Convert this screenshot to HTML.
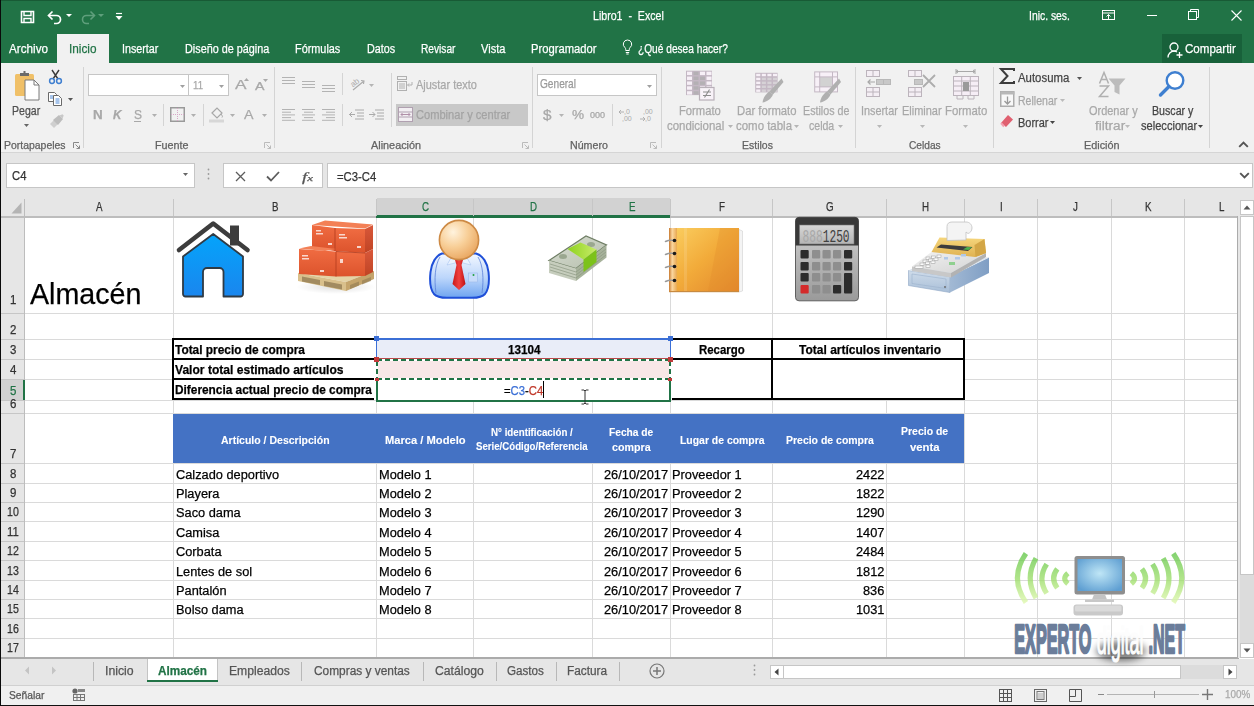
<!DOCTYPE html>
<html><head><meta charset="utf-8"><title>Libro1 - Excel</title>
<style>
html,body{margin:0;padding:0;}
body{width:1254px;height:706px;position:relative;overflow:hidden;background:#fff;font-family:"Liberation Sans",sans-serif;}
span{-webkit-text-stroke:0.25px currentColor;}
</style></head><body>
<div style="position:absolute;left:0px;top:0px;width:1254px;height:63px;background:#217346"></div>
<div style="position:absolute;left:0px;top:0px;width:1254px;height:1px;background:#185a35"></div>
<span id="t0" style="position:absolute;left:593.00px;top:8.78px;font:normal 13.37px/1 'Liberation Sans',sans-serif;color:#fff;white-space:pre;transform-origin:0 0;transform:scaleX(0.7945);">Libro1  -  Excel</span>
<span id="t1" style="position:absolute;left:1028.90px;top:9.87px;font:normal 12.79px/1 'Liberation Sans',sans-serif;color:#fff;white-space:pre;transform-origin:0 0;transform:scaleX(0.8109);">Inic. ses.</span>
<svg style="position:absolute;left:20px;top:10px;overflow:visible" width="15" height="14" viewBox="0 0 15 14"><path d="M1.5 1.5h12v11h-12z" fill="none" stroke="#fff" stroke-width="1.6"/><path d="M4 1.5v4h7v-4" fill="none" stroke="#fff" stroke-width="1.4"/><path d="M4 12.5v-4h7v4" fill="none" stroke="#fff" stroke-width="1.4"/></svg>
<svg style="position:absolute;left:47px;top:10px;overflow:visible" width="16" height="14" viewBox="0 0 16 14"><path d="M2 5.5h7.5a4 4 0 0 1 0 8H7" fill="none" stroke="#fff" stroke-width="1.7"/><path d="M5.5 1.5L1.5 5.5l4 4" fill="none" stroke="#fff" stroke-width="1.7"/></svg>
<svg style="position:absolute;left:66px;top:14px;overflow:visible" width="7" height="4" viewBox="0 0 7 4"><path d="M0 0h6l-3 3z" fill="#fff"/></svg>
<svg style="position:absolute;left:80px;top:10px;overflow:visible" width="16" height="14" viewBox="0 0 16 14"><path d="M14 5.5H6.5a4 4 0 0 0 0 8H9" fill="none" stroke="#5f9f7c" stroke-width="1.6"/><path d="M10.5 1.5l4 4-4 4" fill="none" stroke="#5f9f7c" stroke-width="1.6"/></svg>
<svg style="position:absolute;left:98px;top:14px;overflow:visible" width="7" height="4" viewBox="0 0 7 4"><path d="M0 0h6l-3 3z" fill="#5f9f7c"/></svg>
<svg style="position:absolute;left:115px;top:12px;overflow:visible" width="8" height="9" viewBox="0 0 8 9"><path d="M1 1.5h6" stroke="#fff" stroke-width="1.2"/><path d="M0.5 4h7l-3.5 4z" fill="#fff"/></svg>
<svg style="position:absolute;left:1102px;top:10px;overflow:visible" width="14" height="11" viewBox="0 0 14 11"><rect x="0.5" y="0.5" width="12" height="9" fill="none" stroke="#fff" stroke-width="1"/><path d="M0.5 3h12" stroke="#fff"/><path d="M6.5 9V4.5M4.5 6.5l2-2 2 2" fill="none" stroke="#fff"/></svg>
<div style="position:absolute;left:1147px;top:15px;width:10px;height:1px;background:#fff"></div>
<svg style="position:absolute;left:1188px;top:9px;overflow:visible" width="12" height="12" viewBox="0 0 12 12"><rect x="0.5" y="2.5" width="8" height="8" fill="none" stroke="#fff"/><path d="M2.5 2.5v-2h8v8h-2" fill="none" stroke="#fff"/></svg>
<svg style="position:absolute;left:1231px;top:10px;overflow:visible" width="11" height="11" viewBox="0 0 11 11"><path d="M0.5 0.5l10 10M10.5 0.5l-10 10" stroke="#fff" stroke-width="1.1"/></svg>
<div style="position:absolute;left:57px;top:34px;width:52px;height:29px;background:#f1f1f1"></div>
<span id="t2" style="position:absolute;left:9.00px;top:42.13px;font:normal 13.08px/1 'Liberation Sans',sans-serif;color:#fff;white-space:pre;transform-origin:0 0;transform:scaleX(0.8943);">Archivo</span>
<span id="t3" style="position:absolute;left:69.00px;top:42.13px;font:normal 13.08px/1 'Liberation Sans',sans-serif;color:#217346;white-space:pre;transform-origin:0 0;transform:scaleX(0.9007);">Inicio</span>
<span id="t4" style="position:absolute;left:122.20px;top:42.13px;font:normal 13.08px/1 'Liberation Sans',sans-serif;color:#fff;white-space:pre;transform-origin:0 0;transform:scaleX(0.8209);">Insertar</span>
<span id="t5" style="position:absolute;left:184.90px;top:42.13px;font:normal 13.08px/1 'Liberation Sans',sans-serif;color:#fff;white-space:pre;transform-origin:0 0;transform:scaleX(0.8281);">Diseño de página</span>
<span id="t6" style="position:absolute;left:295.20px;top:42.13px;font:normal 13.08px/1 'Liberation Sans',sans-serif;color:#fff;white-space:pre;transform-origin:0 0;transform:scaleX(0.8310);">Fórmulas</span>
<span id="t7" style="position:absolute;left:367.00px;top:42.13px;font:normal 13.08px/1 'Liberation Sans',sans-serif;color:#fff;white-space:pre;transform-origin:0 0;transform:scaleX(0.8252);">Datos</span>
<span id="t8" style="position:absolute;left:421.30px;top:42.13px;font:normal 13.08px/1 'Liberation Sans',sans-serif;color:#fff;white-space:pre;transform-origin:0 0;transform:scaleX(0.7780);">Revisar</span>
<span id="t9" style="position:absolute;left:481.30px;top:42.13px;font:normal 13.08px/1 'Liberation Sans',sans-serif;color:#fff;white-space:pre;transform-origin:0 0;transform:scaleX(0.8459);">Vista</span>
<span id="t10" style="position:absolute;left:531.20px;top:42.13px;font:normal 13.08px/1 'Liberation Sans',sans-serif;color:#fff;white-space:pre;transform-origin:0 0;transform:scaleX(0.8581);">Programador</span>
<span id="t11" style="position:absolute;left:638.10px;top:42.13px;font:normal 13.08px/1 'Liberation Sans',sans-serif;color:#fff;white-space:pre;transform-origin:0 0;transform:scaleX(0.7768);">¿Qué desea hacer?</span>
<svg style="position:absolute;left:622px;top:39px;overflow:visible" width="11" height="16" viewBox="0 0 11 16"><path d="M5.5 1a4.2 4.2 0 0 0-2.6 7.5c.6.6.8 1.2.8 2v1h3.6v-1c0-.8.2-1.4.8-2A4.2 4.2 0 0 0 5.5 1z" fill="none" stroke="#fff" stroke-width="1"/><path d="M3.8 13.5h3.4M4.3 15h2.4" stroke="#fff"/></svg>
<div style="position:absolute;left:1162px;top:34px;width:80px;height:29px;background:#18613a"></div>
<svg style="position:absolute;left:1167px;top:41.5px;overflow:visible" width="16" height="16" viewBox="0 0 16 16"><circle cx="7" cy="5" r="4" fill="none" stroke="#fff" stroke-width="1.3"/><path d="M1 15.5c0-3.8 2.7-6.3 6-6.3 1.2 0 2.2.3 3 .8" fill="none" stroke="#fff" stroke-width="1.3"/><path d="M12.5 10v6M9.5 13h6" stroke="#fff" stroke-width="1.3"/></svg>
<span id="t12" style="position:absolute;left:1184.90px;top:42.13px;font:normal 13.08px/1 'Liberation Sans',sans-serif;color:#fff;white-space:pre;transform-origin:0 0;transform:scaleX(0.8847);">Compartir</span>
<div style="position:absolute;left:0px;top:63px;width:1254px;height:90px;background:#f1f1f1"></div>
<div style="position:absolute;left:0px;top:152px;width:1254px;height:1px;background:#d5d5d5"></div>
<svg style="position:absolute;left:14px;top:70px;overflow:visible" width="28" height="31" viewBox="0 0 28 31"><rect x="1" y="4" width="19" height="22" rx="1.5" fill="#f0c068"/><path d="M6 6V3h3.5V1h2v2H15v3z" fill="#6b6b6b"/><path d="M11 10h9l5 5v15H11z" fill="#fff" stroke="#7a7a7a" stroke-width="1"/><path d="M20 10v5h5" fill="none" stroke="#7a7a7a"/></svg>
<span id="t13" style="position:absolute;left:12.20px;top:105.34px;font:normal 12.35px/1 'Liberation Sans',sans-serif;color:#505050;white-space:pre;transform-origin:0 0;transform:scaleX(0.8558);">Pegar</span>
<svg style="position:absolute;left:23.5px;top:124.3px;overflow:visible" width="6" height="4" viewBox="0 0 6 4"><path d="M0 0h5l-2.5 3z" fill="#666"/></svg>
<svg style="position:absolute;left:48px;top:69px;overflow:visible" width="15" height="15" viewBox="0 0 15 15"><path d="M4 1l6 9M11 1L5 10" stroke="#3a3a3a" stroke-width="1.4"/><circle cx="4" cy="12" r="2.4" fill="none" stroke="#3f7fd0" stroke-width="1.5"/><circle cx="11" cy="12" r="2.4" fill="none" stroke="#3f7fd0" stroke-width="1.5"/></svg>
<svg style="position:absolute;left:47px;top:91px;overflow:visible" width="16" height="15" viewBox="0 0 16 15"><path d="M1.5 1.5h6l2 2v7h-8z" fill="#fff" stroke="#6a6a6a"/><path d="M6.5 4.5h5l3 3v7h-8z" fill="#fff" stroke="#6a6a6a"/><path d="M8.5 8h4M8.5 10h4M8.5 12h4M3 5h3M3 7h3" stroke="#4f8ad8" stroke-width="1"/></svg>
<svg style="position:absolute;left:68.4px;top:98.3px;overflow:visible" width="6" height="4" viewBox="0 0 6 4"><path d="M0 0h5l-2.5 3z" fill="#555"/></svg>
<svg style="position:absolute;left:49px;top:114px;overflow:visible" width="15" height="14" viewBox="0 0 15 14"><path d="M1 10l4-4 4 4-4 4z" fill="#cfcfcf"/><path d="M4 6l6-5 4 4-5 6z" fill="#bdbdbd"/><path d="M10.5 1.5l3-1.2 1.2 1.2-1.2 3z" fill="#c8c8c8"/></svg>
<span id="t14" style="position:absolute;left:4.20px;top:140.27px;font:normal 10.90px/1 'Liberation Sans',sans-serif;color:#626262;white-space:pre;transform-origin:0 0;transform:scaleX(0.9597);">Portapapeles</span>
<svg style="position:absolute;left:73px;top:142px;overflow:visible" width="7" height="7" viewBox="0 0 7 7"><path d="M0.5 6V0.5H6" fill="none" stroke="#888" stroke-width="1"/><path d="M2.5 2.5l4 4M6.5 3.5v3h-3" fill="none" stroke="#888" stroke-width="1"/></svg>
<div style="position:absolute;left:83px;top:67px;width:1px;height:81px;background:#d4d4d4"></div>
<div style="position:absolute;left:88px;top:74px;width:101px;height:22px;background:#fff;border:1px solid #c6c6c6;box-sizing:border-box"></div>
<div style="position:absolute;left:188px;top:74px;width:41px;height:22px;background:#fff;border:1px solid #c6c6c6;box-sizing:border-box"></div>
<svg style="position:absolute;left:180px;top:85px;overflow:visible" width="6" height="4" viewBox="0 0 6 4"><path d="M0 0h5l-2.5 3z" fill="#a0a0a0"/></svg>
<svg style="position:absolute;left:219px;top:85px;overflow:visible" width="6" height="4" viewBox="0 0 6 4"><path d="M0 0h5l-2.5 3z" fill="#a0a0a0"/></svg>
<span id="t15" style="position:absolute;left:192.50px;top:79.90px;font:normal 11.34px/1 'Liberation Sans',sans-serif;color:#a8a8a8;white-space:pre;transform-origin:0 0;transform:scaleX(0.8499);">11</span>
<span id="t16" style="position:absolute;left:235.00px;top:79.42px;font:normal 12.50px/1 'Liberation Sans',sans-serif;color:#a8a8a8;white-space:pre;transform-origin:0 0;transform:scaleX(1.3783);">A</span>
<svg style="position:absolute;left:244px;top:78px;overflow:visible" width="5" height="3" viewBox="0 0 5 3"><path d="M0 3l2.5-3 2.5 3z" fill="#aaa"/></svg>
<span id="t17" style="position:absolute;left:255.00px;top:81.89px;font:normal 10.17px/1 'Liberation Sans',sans-serif;color:#a8a8a8;white-space:pre;transform-origin:0 0;transform:scaleX(1.4009);">A</span>
<svg style="position:absolute;left:263px;top:79px;overflow:visible" width="5" height="3" viewBox="0 0 5 3"><path d="M0 0h5l-2.5 3z" fill="#aaa"/></svg>
<span id="t18" style="position:absolute;left:92.80px;top:109.16px;font:bold 12.21px/1 'Liberation Sans',sans-serif;color:#a8a8a8;white-space:pre;transform-origin:0 0;transform:scaleX(1.0988);">N</span>
<span id="t19" style="position:absolute;left:113.00px;top:109.16px;font:bold 12.21px/1 'Liberation Sans',sans-serif;color:#a8a8a8;white-space:pre;transform-origin:0 0;transform:scaleX(0.9628);font-style:italic">K</span>
<span id="t20" style="position:absolute;left:133.50px;top:109.16px;font:normal 12.21px/1 'Liberation Sans',sans-serif;color:#a8a8a8;white-space:pre;transform-origin:0 0;transform:scaleX(0.9827);">S</span>
<div style="position:absolute;left:134px;top:121px;width:7px;height:1px;background:#a8a8a8"></div>
<svg style="position:absolute;left:152px;top:114px;overflow:visible" width="6" height="4" viewBox="0 0 6 4"><path d="M0 0h5l-2.5 3z" fill="#b0b0b0"/></svg>
<div style="position:absolute;left:163px;top:104px;width:1px;height:22px;background:#d4d4d4"></div>
<svg style="position:absolute;left:170px;top:107px;overflow:visible" width="15" height="15" viewBox="0 0 15 15"><rect x="0.75" y="0.75" width="13.5" height="13.5" fill="none" stroke="#9a9a9a" stroke-width="1.5"/><path d="M7.5 1v13M1 7.5h13" stroke="#d8a8c8" stroke-width="1" stroke-dasharray="1 1"/></svg>
<svg style="position:absolute;left:191px;top:114px;overflow:visible" width="6" height="4" viewBox="0 0 6 4"><path d="M0 0h5l-2.5 3z" fill="#b0b0b0"/></svg>
<div style="position:absolute;left:203px;top:104px;width:1px;height:22px;background:#d4d4d4"></div>
<svg style="position:absolute;left:209px;top:106px;overflow:visible" width="16" height="17" viewBox="0 0 16 17"><path d="M3 7l5-5 5 5-5 5z" fill="none" stroke="#a8a8a8" stroke-width="1.2"/><path d="M12 8c1 1.5 2 2.5 1 3.5" fill="none" stroke="#a8a8a8"/><rect x="0" y="13.5" width="15" height="3" fill="#d7d7d7"/></svg>
<svg style="position:absolute;left:230px;top:114px;overflow:visible" width="6" height="4" viewBox="0 0 6 4"><path d="M0 0h5l-2.5 3z" fill="#b0b0b0"/></svg>
<span id="t21" style="position:absolute;left:244.00px;top:108.67px;font:normal 12.79px/1 'Liberation Sans',sans-serif;color:#a8a8a8;white-space:pre;transform-origin:0 0;transform:scaleX(1.1136);">A</span>
<svg style="position:absolute;left:262px;top:114px;overflow:visible" width="6" height="4" viewBox="0 0 6 4"><path d="M0 0h5l-2.5 3z" fill="#b0b0b0"/></svg>
<span id="t22" style="position:absolute;left:154.50px;top:140.27px;font:normal 10.90px/1 'Liberation Sans',sans-serif;color:#626262;white-space:pre;transform-origin:0 0;transform:scaleX(0.9880);">Fuente</span>
<svg style="position:absolute;left:263.5px;top:142px;overflow:visible" width="7" height="7" viewBox="0 0 7 7"><path d="M0.5 6V0.5H6" fill="none" stroke="#bbb" stroke-width="1"/><path d="M2.5 2.5l4 4M6.5 3.5v3h-3" fill="none" stroke="#bbb" stroke-width="1"/></svg>
<div style="position:absolute;left:274px;top:67px;width:1px;height:81px;background:#d4d4d4"></div>
<svg style="position:absolute;left:282px;top:77px;overflow:visible" width="13" height="9" viewBox="0 0 13 9"><rect x="0" y="0" width="13" height="1" fill="#b3b3b3"/><rect x="0" y="3" width="13" height="1" fill="#b3b3b3"/><rect x="0" y="6" width="13" height="1" fill="#b3b3b3"/></svg>
<svg style="position:absolute;left:302px;top:81px;overflow:visible" width="13" height="9" viewBox="0 0 13 9"><rect x="0" y="0" width="13" height="1" fill="#b3b3b3"/><rect x="0" y="3" width="13" height="1" fill="#b3b3b3"/><rect x="0" y="6" width="13" height="1" fill="#b3b3b3"/></svg>
<svg style="position:absolute;left:322px;top:85px;overflow:visible" width="13" height="9" viewBox="0 0 13 9"><rect x="0" y="0" width="13" height="1" fill="#b3b3b3"/><rect x="0" y="3" width="13" height="1" fill="#b3b3b3"/><rect x="0" y="6" width="13" height="1" fill="#b3b3b3"/></svg>
<svg style="position:absolute;left:282px;top:109px;overflow:visible" width="14" height="12" viewBox="0 0 14 12"><rect x="0" y="0.0" width="13" height="1" fill="#b3b3b3"/><rect x="0" y="2.7" width="9" height="1" fill="#b3b3b3"/><rect x="0" y="5.4" width="13" height="1" fill="#b3b3b3"/><rect x="0" y="8.1" width="9" height="1" fill="#b3b3b3"/><rect x="0" y="10.8" width="13" height="1" fill="#b3b3b3"/></svg>
<svg style="position:absolute;left:302px;top:109px;overflow:visible" width="14" height="12" viewBox="0 0 14 12"><rect x="0.0" y="0.0" width="13" height="1" fill="#b3b3b3"/><rect x="2.0" y="2.7" width="9" height="1" fill="#b3b3b3"/><rect x="0.0" y="5.4" width="13" height="1" fill="#b3b3b3"/><rect x="2.0" y="8.1" width="9" height="1" fill="#b3b3b3"/><rect x="0.0" y="10.8" width="13" height="1" fill="#b3b3b3"/></svg>
<svg style="position:absolute;left:322px;top:109px;overflow:visible" width="14" height="12" viewBox="0 0 14 12"><rect x="0" y="0.0" width="13" height="1" fill="#b3b3b3"/><rect x="4" y="2.7" width="9" height="1" fill="#b3b3b3"/><rect x="0" y="5.4" width="13" height="1" fill="#b3b3b3"/><rect x="4" y="8.1" width="9" height="1" fill="#b3b3b3"/><rect x="0" y="10.8" width="13" height="1" fill="#b3b3b3"/></svg>
<div style="position:absolute;left:342px;top:73px;width:1px;height:22px;background:#d4d4d4"></div>
<div style="position:absolute;left:342px;top:104px;width:1px;height:22px;background:#d4d4d4"></div>
<svg style="position:absolute;left:349px;top:76px;overflow:visible" width="17" height="16" viewBox="0 0 17 16"><text x="1" y="9" font-family="Liberation Sans" font-size="8" fill="#aaa" transform="rotate(-40 6 6)">ab</text><path d="M4 14l11-9M12 4.5l3 .5-.5 3" fill="none" stroke="#aaa" stroke-width="1.1"/></svg>
<svg style="position:absolute;left:369px;top:84px;overflow:visible" width="6" height="4" viewBox="0 0 6 4"><path d="M0 0h5l-2.5 3z" fill="#b5b5b5"/></svg>
<svg style="position:absolute;left:349px;top:107px;overflow:visible" width="16" height="14" viewBox="0 0 16 14"><path d="M6 3h9M8 6h7M8 9h7M6 12h9M0 7.5h6M3 5l-2.5 2.5L3 10" fill="none" stroke="#aaa" stroke-width="1"/></svg>
<svg style="position:absolute;left:369px;top:107px;overflow:visible" width="16" height="14" viewBox="0 0 16 14"><path d="M6 3h9M8 6h7M8 9h7M6 12h9M0 7.5h6M3.5 5L6 7.5 3.5 10" fill="none" stroke="#aaa" stroke-width="1"/></svg>
<div style="position:absolute;left:391px;top:73px;width:1px;height:54px;background:#d4d4d4"></div>
<svg style="position:absolute;left:397px;top:76px;overflow:visible" width="16" height="16" viewBox="0 0 16 16"><rect x="0.5" y="0.5" width="9" height="3" fill="none" stroke="#b0b0b0"/><rect x="0.5" y="5.5" width="9" height="9" fill="none" stroke="#b0b0b0"/><path d="M2 8h6M2 10h6M2 12h6" stroke="#b0b0b0"/><path d="M15 6v3h-4M12 7.5l-1.5 1.5 1.5 1.5" fill="none" stroke="#b0b0b0"/></svg>
<span id="t23" style="position:absolute;left:415.90px;top:79.04px;font:normal 12.35px/1 'Liberation Sans',sans-serif;color:#a8a8a8;white-space:pre;transform-origin:0 0;transform:scaleX(0.8876);">Ajustar texto</span>
<div style="position:absolute;left:396px;top:104px;width:132px;height:22px;background:#c8c8c8"></div>
<svg style="position:absolute;left:398px;top:107px;overflow:visible" width="16" height="16" viewBox="0 0 16 16"><rect x="0.5" y="0.5" width="14" height="14" fill="#f2eef2" stroke="#b0a0b0"/><path d="M0.5 5h14M0.5 10h14" stroke="#b0a0b0"/><path d="M3 7.5h9M4.5 6l-1.5 1.5 1.5 1.5M10.5 6l1.5 1.5-1.5 1.5" fill="none" stroke="#b08fa8"/></svg>
<span id="t24" style="position:absolute;left:415.90px;top:109.04px;font:normal 12.35px/1 'Liberation Sans',sans-serif;color:#a3a3a3;white-space:pre;transform-origin:0 0;transform:scaleX(0.8984);">Combinar y centrar</span>
<span id="t25" style="position:absolute;left:370.70px;top:140.27px;font:normal 10.90px/1 'Liberation Sans',sans-serif;color:#626262;white-space:pre;transform-origin:0 0;transform:scaleX(0.9967);">Alineación</span>
<svg style="position:absolute;left:522px;top:142px;overflow:visible" width="7" height="7" viewBox="0 0 7 7"><path d="M0.5 6V0.5H6" fill="none" stroke="#bbb" stroke-width="1"/><path d="M2.5 2.5l4 4M6.5 3.5v3h-3" fill="none" stroke="#bbb" stroke-width="1"/></svg>
<div style="position:absolute;left:532px;top:67px;width:1px;height:81px;background:#d4d4d4"></div>
<div style="position:absolute;left:537px;top:74px;width:120px;height:22px;background:#fff;border:1px solid #c6c6c6;box-sizing:border-box"></div>
<span id="t26" style="position:absolute;left:539.50px;top:79.41px;font:normal 11.92px/1 'Liberation Sans',sans-serif;color:#9a9a9a;white-space:pre;transform-origin:0 0;transform:scaleX(0.8499);">General</span>
<svg style="position:absolute;left:647px;top:84.5px;overflow:visible" width="6" height="4" viewBox="0 0 6 4"><path d="M0 0h5l-2.5 3z" fill="#a0a0a0"/></svg>
<span id="t27" style="position:absolute;left:542.50px;top:108.81px;font:normal 13.81px/1 'Liberation Sans',sans-serif;color:#a8a8a8;white-space:pre;transform-origin:0 0;transform:scaleX(1.1057);">$</span>
<svg style="position:absolute;left:558.5px;top:114px;overflow:visible" width="6" height="4" viewBox="0 0 6 4"><path d="M0 0h5l-2.5 3z" fill="#b5b5b5"/></svg>
<span id="t28" style="position:absolute;left:572.40px;top:108.92px;font:normal 12.50px/1 'Liberation Sans',sans-serif;color:#a8a8a8;white-space:pre;transform-origin:0 0;transform:scaleX(1.0876);">%</span>
<span id="t29" style="position:absolute;left:590.30px;top:111.36px;font:normal 8.43px/1 'Liberation Sans',sans-serif;color:#a8a8a8;white-space:pre;transform-origin:0 0;transform:scaleX(1.0738);">000</span>
<div style="position:absolute;left:612px;top:104px;width:1px;height:22px;background:#d4d4d4"></div>
<svg style="position:absolute;left:619px;top:108px;overflow:visible" width="15" height="14" viewBox="0 0 15 14"><text x="5" y="6" font-family="Liberation Sans" font-size="7" fill="#aaa">,0</text><text x="3" y="13" font-family="Liberation Sans" font-size="7" fill="#aaa">,00</text><path d="M5 4H0M2 2L0 4l2 2" fill="none" stroke="#aaa" stroke-width="0.9"/></svg>
<svg style="position:absolute;left:639px;top:108px;overflow:visible" width="15" height="14" viewBox="0 0 15 14"><text x="4" y="6" font-family="Liberation Sans" font-size="7" fill="#aaa">,00</text><text x="6" y="13" font-family="Liberation Sans" font-size="7" fill="#aaa">,0</text><path d="M1 11h5M4 9l2 2-2 2" fill="none" stroke="#aaa" stroke-width="0.9"/></svg>
<span id="t30" style="position:absolute;left:570.40px;top:140.27px;font:normal 10.90px/1 'Liberation Sans',sans-serif;color:#626262;white-space:pre;transform-origin:0 0;transform:scaleX(0.9785);">Número</span>
<svg style="position:absolute;left:650px;top:142px;overflow:visible" width="7" height="7" viewBox="0 0 7 7"><path d="M0.5 6V0.5H6" fill="none" stroke="#bbb" stroke-width="1"/><path d="M2.5 2.5l4 4M6.5 3.5v3h-3" fill="none" stroke="#bbb" stroke-width="1"/></svg>
<div style="position:absolute;left:661px;top:67px;width:1px;height:81px;background:#d4d4d4"></div>
<svg style="position:absolute;left:686px;top:70px;overflow:visible" width="29" height="31" viewBox="0 0 29 31"><rect x="0" y="0.7" width="26" height="24.4" fill="#c4b8c4"/><rect x="1.00" y="1.70" width="5.00" height="3.38" fill="#f7f0f7"/><rect x="1.00" y="6.58" width="5.00" height="3.38" fill="#f7f0f7"/><rect x="1.00" y="11.46" width="5.00" height="3.38" fill="#f7f0f7"/><rect x="1.00" y="16.34" width="5.00" height="3.38" fill="#f7f0f7"/><rect x="1.00" y="21.22" width="5.00" height="3.38" fill="#f7f0f7"/><rect x="7.50" y="1.70" width="5.00" height="3.38" fill="#b4b0b4"/><rect x="7.50" y="6.58" width="5.00" height="3.38" fill="#b4b0b4"/><rect x="7.50" y="11.46" width="5.00" height="3.38" fill="#b4b0b4"/><rect x="7.50" y="16.34" width="5.00" height="3.38" fill="#b4b0b4"/><rect x="7.50" y="21.22" width="5.00" height="3.38" fill="#b4b0b4"/><rect x="14.00" y="1.70" width="5.00" height="3.38" fill="#f7f0f7"/><rect x="14.00" y="6.58" width="5.00" height="3.38" fill="#b4b0b4"/><rect x="14.00" y="11.46" width="5.00" height="3.38" fill="#b4b0b4"/><rect x="14.00" y="16.34" width="5.00" height="3.38" fill="#f7f0f7"/><rect x="14.00" y="21.22" width="5.00" height="3.38" fill="#f7f0f7"/><rect x="20.50" y="1.70" width="5.00" height="3.38" fill="#f7f0f7"/><rect x="20.50" y="6.58" width="5.00" height="3.38" fill="#f7f0f7"/><rect x="20.50" y="11.46" width="5.00" height="3.38" fill="#f7f0f7"/><rect x="20.50" y="16.34" width="5.00" height="3.38" fill="#f7f0f7"/><rect x="20.50" y="21.22" width="5.00" height="3.38" fill="#f7f0f7"/><rect x="13.5" y="17.5" width="14.5" height="12.5" fill="#f8f2f8" stroke="#b8b0b8" stroke-width="1.2"/><path d="M17 22h8M17 25.5h8M23.5 19.5l-5 8" stroke="#8c8c8c" stroke-width="1.1"/></svg>
<svg style="position:absolute;left:755px;top:72px;overflow:visible" width="30" height="30" viewBox="0 0 30 30"><rect x="0.2" y="0.8" width="22.4" height="19.6" fill="#c4b8c4"/><rect x="1.20" y="1.80" width="4.10" height="2.42" fill="#f7f0f7"/><rect x="1.20" y="5.72" width="4.10" height="2.42" fill="#f7f0f7"/><rect x="1.20" y="9.64" width="4.10" height="2.42" fill="#f7f0f7"/><rect x="1.20" y="13.56" width="4.10" height="2.42" fill="#f7f0f7"/><rect x="1.20" y="17.48" width="4.10" height="2.42" fill="#f7f0f7"/><rect x="6.80" y="1.80" width="4.10" height="2.42" fill="#f7f0f7"/><rect x="6.80" y="5.72" width="4.10" height="2.42" fill="#d6d2d6"/><rect x="6.80" y="9.64" width="4.10" height="2.42" fill="#d6d2d6"/><rect x="6.80" y="13.56" width="4.10" height="2.42" fill="#d6d2d6"/><rect x="6.80" y="17.48" width="4.10" height="2.42" fill="#d6d2d6"/><rect x="12.40" y="1.80" width="4.10" height="2.42" fill="#f7f0f7"/><rect x="12.40" y="5.72" width="4.10" height="2.42" fill="#d6d2d6"/><rect x="12.40" y="9.64" width="4.10" height="2.42" fill="#d6d2d6"/><rect x="12.40" y="13.56" width="4.10" height="2.42" fill="#d6d2d6"/><rect x="12.40" y="17.48" width="4.10" height="2.42" fill="#d6d2d6"/><rect x="18.00" y="1.80" width="4.10" height="2.42" fill="#f7f0f7"/><rect x="18.00" y="5.72" width="4.10" height="2.42" fill="#d6d2d6"/><rect x="18.00" y="9.64" width="4.10" height="2.42" fill="#d6d2d6"/><rect x="18.00" y="13.56" width="4.10" height="2.42" fill="#d6d2d6"/><rect x="18.00" y="17.48" width="4.10" height="2.42" fill="#d6d2d6"/><path d="M26.5 6.5l2 3.5-10.5 12.5-3.5-3z" fill="#b0b0b0"/><path d="M14.5 19.5l3.5 3c-1.5 4-6 7.5-10.5 8 .5-4.5 3.5-9 7-11z" fill="#b0b0b0"/></svg>
<svg style="position:absolute;left:814px;top:71px;overflow:visible" width="30" height="31" viewBox="0 0 30 31"><rect x="0.2" y="0.4" width="23.8" height="21" fill="#c4b8c4"/><rect x="1.2" y="1.4" width="4" height="4" fill="#f7f0f7"/><rect x="6.2" y="1.4" width="11.8" height="4" fill="#f7f0f7"/><rect x="19" y="1.4" width="4" height="4" fill="#f7f0f7"/><rect x="1.2" y="6.4" width="4" height="9" fill="#f7f0f7"/><rect x="6.2" y="6.4" width="11.8" height="9" fill="#d2d2d2"/><rect x="19" y="6.4" width="4" height="9" fill="#f7f0f7"/><rect x="1.2" y="16.4" width="4" height="4" fill="#f7f0f7"/><rect x="6.2" y="16.4" width="11.8" height="4" fill="#f7f0f7"/><rect x="19" y="16.4" width="4" height="4" fill="#f7f0f7"/><path d="M25 7.5l2 3.5-10.5 12.5-3.5-3z" fill="#b0b0b0"/><path d="M13 20.5l3.5 3c-1.5 4-6 7.5-10.5 8 .5-4.5 3.5-9 7-11z" fill="#b0b0b0"/></svg>
<span id="t31" style="position:absolute;left:678.50px;top:104.77px;font:normal 12.79px/1 'Liberation Sans',sans-serif;color:#a8a8a8;white-space:pre;transform-origin:0 0;transform:scaleX(0.8783);">Formato</span>
<span id="t32" style="position:absolute;left:667.10px;top:120.17px;font:normal 12.79px/1 'Liberation Sans',sans-serif;color:#a8a8a8;white-space:pre;transform-origin:0 0;transform:scaleX(0.8944);">condicional</span>
<svg style="position:absolute;left:728px;top:125px;overflow:visible" width="6" height="4" viewBox="0 0 6 4"><path d="M0 0h5l-2.5 3z" fill="#b5b5b5"/></svg>
<span id="t33" style="position:absolute;left:737.40px;top:104.77px;font:normal 12.79px/1 'Liberation Sans',sans-serif;color:#a8a8a8;white-space:pre;transform-origin:0 0;transform:scaleX(0.8817);">Dar formato</span>
<span id="t34" style="position:absolute;left:735.50px;top:120.17px;font:normal 12.79px/1 'Liberation Sans',sans-serif;color:#a8a8a8;white-space:pre;transform-origin:0 0;transform:scaleX(0.8956);">como tabla</span>
<svg style="position:absolute;left:794px;top:125px;overflow:visible" width="6" height="4" viewBox="0 0 6 4"><path d="M0 0h5l-2.5 3z" fill="#b5b5b5"/></svg>
<span id="t35" style="position:absolute;left:802.50px;top:104.77px;font:normal 12.79px/1 'Liberation Sans',sans-serif;color:#a8a8a8;white-space:pre;transform-origin:0 0;transform:scaleX(0.8372);">Estilos de</span>
<span id="t36" style="position:absolute;left:809.20px;top:120.17px;font:normal 12.79px/1 'Liberation Sans',sans-serif;color:#a8a8a8;white-space:pre;transform-origin:0 0;transform:scaleX(0.8245);">celda</span>
<svg style="position:absolute;left:838px;top:125px;overflow:visible" width="6" height="4" viewBox="0 0 6 4"><path d="M0 0h5l-2.5 3z" fill="#b5b5b5"/></svg>
<span id="t37" style="position:absolute;left:741.80px;top:140.27px;font:normal 10.90px/1 'Liberation Sans',sans-serif;color:#626262;white-space:pre;transform-origin:0 0;transform:scaleX(0.9633);">Estilos</span>
<div style="position:absolute;left:855px;top:67px;width:1px;height:81px;background:#d4d4d4"></div>
<svg style="position:absolute;left:866px;top:70px;overflow:visible" width="26" height="28" viewBox="0 0 26 28"><rect x="0.5" y="0.5" width="13" height="6" fill="#f4eef4" stroke="#bcb4bc"/><path d="M7.0 0v7" stroke="#bcb4bc"/><g transform="translate(0,17)"><rect x="0.5" y="0.5" width="13" height="9" fill="#f4eef4" stroke="#bcb4bc"/><path d="M7.0 0v10" stroke="#bcb4bc"/><path d="M0 5.0h14" stroke="#bcb4bc"/></g><g transform="translate(10,9)"><rect x="0.5" y="0.5" width="14" height="5" fill="#c8c8c8" stroke="#b8b8b8"/><path d="M7.5 0v6" stroke="#b8b8b8"/></g><path d="M9 12H2M4.5 9.5L2 12l2.5 2.5" fill="none" stroke="#a8a8a8" stroke-width="1.2"/></svg>
<span id="t38" style="position:absolute;left:860.50px;top:104.77px;font:normal 12.79px/1 'Liberation Sans',sans-serif;color:#a8a8a8;white-space:pre;transform-origin:0 0;transform:scaleX(0.8490);">Insertar</span>
<svg style="position:absolute;left:877px;top:125px;overflow:visible" width="6" height="4" viewBox="0 0 6 4"><path d="M0 0h5l-2.5 3z" fill="#b8b8b8"/></svg>
<svg style="position:absolute;left:908px;top:70px;overflow:visible" width="28" height="28" viewBox="0 0 28 28"><rect x="0.5" y="0.5" width="13" height="6" fill="#f4eef4" stroke="#bcb4bc"/><path d="M7.0 0v7" stroke="#bcb4bc"/><g transform="translate(0,17)"><rect x="0.5" y="0.5" width="13" height="9" fill="#f4eef4" stroke="#bcb4bc"/><path d="M7.0 0v10" stroke="#bcb4bc"/><path d="M0 5.0h14" stroke="#bcb4bc"/></g><g transform="translate(6,9)"><rect x="0.5" y="0.5" width="8" height="5" fill="#c8c8c8" stroke="#b8b8b8"/></g><path d="M15 5l12 12M27 5L15 17" stroke="#adadad" stroke-width="1.8"/></svg>
<span id="t39" style="position:absolute;left:901.50px;top:104.77px;font:normal 12.79px/1 'Liberation Sans',sans-serif;color:#a8a8a8;white-space:pre;transform-origin:0 0;transform:scaleX(0.8577);">Eliminar</span>
<svg style="position:absolute;left:920px;top:125px;overflow:visible" width="6" height="4" viewBox="0 0 6 4"><path d="M0 0h5l-2.5 3z" fill="#b8b8b8"/></svg>
<svg style="position:absolute;left:952px;top:69px;overflow:visible" width="28" height="32" viewBox="0 0 28 32"><path d="M4 2.5h19M4 0v5M23 0v5M6 1l-2 1.5L6 4M21 1l2 1.5L21 4" fill="none" stroke="#a8a8a8"/><g transform="translate(1,7)"><rect x="0.5" y="0.5" width="25" height="19" fill="#f6eef6" stroke="#bcb4bc"/><path d="M8.7 0v20" stroke="#bcb4bc"/><path d="M17.3 0v20" stroke="#bcb4bc"/><path d="M0 5.0h26" stroke="#bcb4bc"/><path d="M0 10.0h26" stroke="#bcb4bc"/><path d="M0 15.0h26" stroke="#bcb4bc"/><rect x="10" y="6" width="6" height="9" fill="#9a9a9a"/></g><path d="M5 27v3h6v-3M16 27v3h6v-3" fill="none" stroke="#bcb4bc"/></svg>
<span id="t40" style="position:absolute;left:945.00px;top:104.77px;font:normal 12.79px/1 'Liberation Sans',sans-serif;color:#a8a8a8;white-space:pre;transform-origin:0 0;transform:scaleX(0.8888);">Formato</span>
<svg style="position:absolute;left:963px;top:125px;overflow:visible" width="6" height="4" viewBox="0 0 6 4"><path d="M0 0h5l-2.5 3z" fill="#b8b8b8"/></svg>
<span id="t41" style="position:absolute;left:908.80px;top:140.27px;font:normal 10.90px/1 'Liberation Sans',sans-serif;color:#626262;white-space:pre;transform-origin:0 0;transform:scaleX(0.9349);">Celdas</span>
<div style="position:absolute;left:993px;top:67px;width:1px;height:81px;background:#d4d4d4"></div>
<svg style="position:absolute;left:1000px;top:68px;overflow:visible" width="16" height="16" viewBox="0 0 16 16"><path d="M14 3V1H1l6.5 7L1 15h13v-2" fill="none" stroke="#3d3d3d" stroke-width="2"/></svg>
<span id="t42" style="position:absolute;left:1017.70px;top:72.22px;font:normal 12.50px/1 'Liberation Sans',sans-serif;color:#444444;white-space:pre;transform-origin:0 0;transform:scaleX(0.9115);">Autosuma</span>
<svg style="position:absolute;left:1077px;top:77px;overflow:visible" width="6" height="4" viewBox="0 0 6 4"><path d="M0 0h5l-2.5 3z" fill="#555"/></svg>
<svg style="position:absolute;left:1000px;top:91px;overflow:visible" width="15" height="16" viewBox="0 0 15 16"><rect x="0.75" y="0.75" width="13" height="14.5" fill="#f8f8f8" stroke="#adadad" stroke-width="1.5"/><rect x="0.5" y="0.5" width="14" height="3" fill="#b8b8b8"/><path d="M7.5 5.5v7.5M4.5 10l3 3 3-3" fill="none" stroke="#9a9a9a" stroke-width="1.3"/></svg>
<span id="t43" style="position:absolute;left:1017.70px;top:94.72px;font:normal 12.50px/1 'Liberation Sans',sans-serif;color:#a8a8a8;white-space:pre;transform-origin:0 0;transform:scaleX(0.8440);">Rellenar</span>
<svg style="position:absolute;left:1060px;top:99px;overflow:visible" width="6" height="4" viewBox="0 0 6 4"><path d="M0 0h5l-2.5 3z" fill="#bbb"/></svg>
<svg style="position:absolute;left:1000px;top:114px;overflow:visible" width="14" height="13" viewBox="0 0 14 13"><path d="M1 9l7-8 5 4.5-7 7.5z" fill="#e06070"/><path d="M1 9l3 3.5" stroke="#f3a0b0" stroke-width="2"/></svg>
<span id="t44" style="position:absolute;left:1017.70px;top:117.22px;font:normal 12.50px/1 'Liberation Sans',sans-serif;color:#444444;white-space:pre;transform-origin:0 0;transform:scaleX(0.8781);">Borrar</span>
<svg style="position:absolute;left:1050px;top:121px;overflow:visible" width="6" height="4" viewBox="0 0 6 4"><path d="M0 0h5l-2.5 3z" fill="#444"/></svg>
<svg style="position:absolute;left:1098px;top:71px;overflow:visible" width="29" height="27" viewBox="0 0 29 27"><path d="M1.5 12.5L6 1.5l4.5 11M3.2 8.5h5.6" fill="none" stroke="#b0b0b0" stroke-width="1.5"/><path d="M1.5 15h9l-9 10.5h9" fill="none" stroke="#b0b0b0" stroke-width="1.5"/><path d="M10.5 7.5h17l-6 7v9l-5-2.5v-6.5z" fill="#bcbcbc"/></svg>
<span id="t45" style="position:absolute;left:1088.70px;top:105.02px;font:normal 12.50px/1 'Liberation Sans',sans-serif;color:#a8a8a8;white-space:pre;transform-origin:0 0;transform:scaleX(0.8760);">Ordenar y</span>
<span id="t46" style="position:absolute;left:1095.30px;top:120.42px;font:normal 12.50px/1 'Liberation Sans',sans-serif;color:#a8a8a8;white-space:pre;transform-origin:0 0;transform:scaleX(1.0871);">filtrar</span>
<svg style="position:absolute;left:1125px;top:125px;overflow:visible" width="6" height="4" viewBox="0 0 6 4"><path d="M0 0h5l-2.5 3z" fill="#bbb"/></svg>
<svg style="position:absolute;left:1158px;top:70px;overflow:visible" width="28" height="28" viewBox="0 0 28 28"><circle cx="17" cy="10.5" r="8.3" fill="#fff" stroke="#3e7fd0" stroke-width="2.4"/><path d="M11 16.5L2.5 25" stroke="#3e7fd0" stroke-width="3.4" stroke-linecap="round"/></svg>
<span id="t47" style="position:absolute;left:1152.10px;top:105.02px;font:normal 12.50px/1 'Liberation Sans',sans-serif;color:#444444;white-space:pre;transform-origin:0 0;transform:scaleX(0.8511);">Buscar y</span>
<span id="t48" style="position:absolute;left:1140.70px;top:120.42px;font:normal 12.50px/1 'Liberation Sans',sans-serif;color:#444444;white-space:pre;transform-origin:0 0;transform:scaleX(0.8872);">seleccionar</span>
<svg style="position:absolute;left:1198px;top:125px;overflow:visible" width="6" height="4" viewBox="0 0 6 4"><path d="M0 0h5l-2.5 3z" fill="#444"/></svg>
<span id="t49" style="position:absolute;left:1083.90px;top:140.27px;font:normal 10.90px/1 'Liberation Sans',sans-serif;color:#626262;white-space:pre;transform-origin:0 0;transform:scaleX(0.9962);">Edición</span>
<div style="position:absolute;left:1209px;top:67px;width:1px;height:81px;background:#d4d4d4"></div>
<svg style="position:absolute;left:1238px;top:141px;overflow:visible" width="11" height="7" viewBox="0 0 11 7"><path d="M1.2 5.8l4.3-4.3 4.3 4.3" fill="none" stroke="#555" stroke-width="1.9"/></svg>
<div style="position:absolute;left:0px;top:153px;width:1254px;height:45px;background:#e6e6e6"></div>
<div style="position:absolute;left:6px;top:163px;width:189px;height:25px;background:#fff;border:1px solid #c6c6c6;box-sizing:border-box"></div>
<span id="t50" style="position:absolute;left:11.90px;top:170.36px;font:normal 12.21px/1 'Liberation Sans',sans-serif;color:#333;white-space:pre;transform-origin:0 0;transform:scaleX(0.9225);">C4</span>
<svg style="position:absolute;left:183px;top:173px;overflow:visible" width="6" height="4" viewBox="0 0 6 4"><path d="M0 0h5l-2.5 3z" fill="#666"/></svg>
<svg style="position:absolute;left:207px;top:168px;overflow:visible" width="3" height="13" viewBox="0 0 3 13"><circle cx="1.5" cy="1.5" r="0.9" fill="#9a9a9a"/><circle cx="1.5" cy="6" r="0.9" fill="#9a9a9a"/><circle cx="1.5" cy="10.5" r="0.9" fill="#9a9a9a"/></svg>
<div style="position:absolute;left:223px;top:163px;width:100px;height:25px;background:#fff;border:1px solid #c6c6c6;box-sizing:border-box"></div>
<svg style="position:absolute;left:235px;top:171px;overflow:visible" width="11" height="11" viewBox="0 0 11 11"><path d="M1 1l9 9M10 1l-9 9" stroke="#5c5c5c" stroke-width="1.3"/></svg>
<svg style="position:absolute;left:266px;top:171px;overflow:visible" width="14" height="11" viewBox="0 0 14 11"><path d="M1 5.5l4 4L13 1" fill="none" stroke="#5c5c5c" stroke-width="1.8"/></svg>
<span id="t51" style="position:absolute;left:301.50px;top:169.93px;font:normal 13.08px/1 'Liberation Sans',sans-serif;color:#555;white-space:pre;transform-origin:0 0;transform:scaleX(1.4280);font-family:Liberation Serif"><i>f</i><span style="font-size:0.7em"><i>x</i></span></span>
<div style="position:absolute;left:327px;top:163px;width:926px;height:25px;background:#fff;border:1px solid #c6c6c6;box-sizing:border-box"></div>
<span id="t52" style="position:absolute;left:337.40px;top:170.03px;font:normal 13.08px/1 'Liberation Sans',sans-serif;color:#333;white-space:pre;transform-origin:0 0;transform:scaleX(0.8649);">=C3-C4</span>
<svg style="position:absolute;left:1239px;top:172px;overflow:visible" width="11" height="7" viewBox="0 0 11 7"><path d="M1.2 1.2l4.3 4.3 4.3-4.3" fill="none" stroke="#555" stroke-width="1.9"/></svg>
<div style="position:absolute;left:25px;top:218px;width:1212px;height:440px;background:#fff"></div>
<div style="position:absolute;left:1px;top:198px;width:1237px;height:19px;background:#e6e6e6"></div>
<div style="position:absolute;left:377px;top:198px;width:293px;height:19px;background:#d2d2d2"></div>
<div style="position:absolute;left:376px;top:215px;width:294px;height:2px;background:#217346"></div>
<div style="position:absolute;left:0px;top:216px;width:1238px;height:2px;background:#bdbdbd"></div>
<div style="position:absolute;left:376px;top:216px;width:294px;height:2px;background:#217346"></div>
<div style="position:absolute;left:173px;top:199px;width:1px;height:17px;background:#c6c6c6"></div>
<div style="position:absolute;left:376px;top:199px;width:1px;height:17px;background:#c6c6c6"></div>
<div style="position:absolute;left:473px;top:199px;width:1px;height:17px;background:#c6c6c6"></div>
<div style="position:absolute;left:592px;top:199px;width:1px;height:17px;background:#c6c6c6"></div>
<div style="position:absolute;left:670px;top:199px;width:1px;height:17px;background:#c6c6c6"></div>
<div style="position:absolute;left:772px;top:199px;width:1px;height:17px;background:#c6c6c6"></div>
<div style="position:absolute;left:886px;top:199px;width:1px;height:17px;background:#c6c6c6"></div>
<div style="position:absolute;left:964px;top:199px;width:1px;height:17px;background:#c6c6c6"></div>
<div style="position:absolute;left:1037px;top:199px;width:1px;height:17px;background:#c6c6c6"></div>
<div style="position:absolute;left:1111px;top:199px;width:1px;height:17px;background:#c6c6c6"></div>
<div style="position:absolute;left:1184px;top:199px;width:1px;height:17px;background:#c6c6c6"></div>
<div style="position:absolute;left:24px;top:199px;width:1px;height:459px;background:#bdbdbd"></div>
<svg style="position:absolute;left:11px;top:202px;overflow:visible" width="11" height="12" viewBox="0 0 11 12"><path d="M10.5 0.5V11.5H0.5z" fill="#b4b4b4"/></svg>
<span id="t53" style="position:absolute;left:96.25px;top:201.22px;font:normal 12.50px/1 'Liberation Sans',sans-serif;color:#333;white-space:pre;transform-origin:0 0;transform:scaleX(0.7800);">A</span>
<span id="t54" style="position:absolute;left:272.25px;top:201.22px;font:normal 12.50px/1 'Liberation Sans',sans-serif;color:#333;white-space:pre;transform-origin:0 0;transform:scaleX(0.7800);">B</span>
<span id="t55" style="position:absolute;left:421.98px;top:201.22px;font:normal 12.50px/1 'Liberation Sans',sans-serif;color:#217346;white-space:pre;transform-origin:0 0;transform:scaleX(0.7800);">C</span>
<span id="t56" style="position:absolute;left:529.98px;top:201.22px;font:normal 12.50px/1 'Liberation Sans',sans-serif;color:#217346;white-space:pre;transform-origin:0 0;transform:scaleX(0.7800);">D</span>
<span id="t57" style="position:absolute;left:628.75px;top:201.22px;font:normal 12.50px/1 'Liberation Sans',sans-serif;color:#217346;white-space:pre;transform-origin:0 0;transform:scaleX(0.7800);">E</span>
<span id="t58" style="position:absolute;left:719.02px;top:201.22px;font:normal 12.50px/1 'Liberation Sans',sans-serif;color:#333;white-space:pre;transform-origin:0 0;transform:scaleX(0.7800);">F</span>
<span id="t59" style="position:absolute;left:826.20px;top:201.22px;font:normal 12.50px/1 'Liberation Sans',sans-serif;color:#333;white-space:pre;transform-origin:0 0;transform:scaleX(0.7800);">G</span>
<span id="t60" style="position:absolute;left:922.48px;top:201.22px;font:normal 12.50px/1 'Liberation Sans',sans-serif;color:#333;white-space:pre;transform-origin:0 0;transform:scaleX(0.7800);">H</span>
<span id="t61" style="position:absolute;left:1000.14px;top:201.22px;font:normal 12.50px/1 'Liberation Sans',sans-serif;color:#333;white-space:pre;transform-origin:0 0;transform:scaleX(0.7800);">I</span>
<span id="t62" style="position:absolute;left:1072.56px;top:201.22px;font:normal 12.50px/1 'Liberation Sans',sans-serif;color:#333;white-space:pre;transform-origin:0 0;transform:scaleX(0.7800);">J</span>
<span id="t63" style="position:absolute;left:1145.25px;top:201.22px;font:normal 12.50px/1 'Liberation Sans',sans-serif;color:#333;white-space:pre;transform-origin:0 0;transform:scaleX(0.7800);">K</span>
<span id="t64" style="position:absolute;left:1218.79px;top:201.22px;font:normal 12.50px/1 'Liberation Sans',sans-serif;color:#333;white-space:pre;transform-origin:0 0;transform:scaleX(0.7800);">L</span>
<div style="position:absolute;left:1px;top:218px;width:23px;height:440px;background:#e6e6e6"></div>
<div style="position:absolute;left:1px;top:380px;width:23px;height:20px;background:#d2d2d2"></div>
<div style="position:absolute;left:23px;top:380px;width:2px;height:20px;background:#217346"></div>
<div style="position:absolute;left:1px;top:313px;width:23px;height:1px;background:#c6c6c6"></div>
<div style="position:absolute;left:1px;top:339px;width:23px;height:1px;background:#c6c6c6"></div>
<div style="position:absolute;left:1px;top:359px;width:23px;height:1px;background:#c6c6c6"></div>
<div style="position:absolute;left:1px;top:379px;width:23px;height:1px;background:#c6c6c6"></div>
<div style="position:absolute;left:1px;top:400px;width:23px;height:1px;background:#c6c6c6"></div>
<div style="position:absolute;left:1px;top:413px;width:23px;height:1px;background:#c6c6c6"></div>
<div style="position:absolute;left:1px;top:463px;width:23px;height:1px;background:#c6c6c6"></div>
<div style="position:absolute;left:1px;top:483px;width:23px;height:1px;background:#c6c6c6"></div>
<div style="position:absolute;left:1px;top:502px;width:23px;height:1px;background:#c6c6c6"></div>
<div style="position:absolute;left:1px;top:521px;width:23px;height:1px;background:#c6c6c6"></div>
<div style="position:absolute;left:1px;top:541px;width:23px;height:1px;background:#c6c6c6"></div>
<div style="position:absolute;left:1px;top:560px;width:23px;height:1px;background:#c6c6c6"></div>
<div style="position:absolute;left:1px;top:580px;width:23px;height:1px;background:#c6c6c6"></div>
<div style="position:absolute;left:1px;top:599px;width:23px;height:1px;background:#c6c6c6"></div>
<div style="position:absolute;left:1px;top:618px;width:23px;height:1px;background:#c6c6c6"></div>
<div style="position:absolute;left:1px;top:638px;width:23px;height:1px;background:#c6c6c6"></div>
<div style="position:absolute;left:1px;top:657px;width:23px;height:1px;background:#c6c6c6"></div>
<div style="position:absolute;left:25px;top:313px;width:1212px;height:1px;background:#dadada"></div>
<div style="position:absolute;left:25px;top:339px;width:1212px;height:1px;background:#dadada"></div>
<div style="position:absolute;left:25px;top:359px;width:1212px;height:1px;background:#dadada"></div>
<div style="position:absolute;left:25px;top:379px;width:1212px;height:1px;background:#dadada"></div>
<div style="position:absolute;left:25px;top:400px;width:1212px;height:1px;background:#dadada"></div>
<div style="position:absolute;left:25px;top:413px;width:1212px;height:1px;background:#dadada"></div>
<div style="position:absolute;left:25px;top:463px;width:1212px;height:1px;background:#dadada"></div>
<div style="position:absolute;left:25px;top:483px;width:1212px;height:1px;background:#dadada"></div>
<div style="position:absolute;left:25px;top:502px;width:1212px;height:1px;background:#dadada"></div>
<div style="position:absolute;left:25px;top:521px;width:1212px;height:1px;background:#dadada"></div>
<div style="position:absolute;left:25px;top:541px;width:1212px;height:1px;background:#dadada"></div>
<div style="position:absolute;left:25px;top:560px;width:1212px;height:1px;background:#dadada"></div>
<div style="position:absolute;left:25px;top:580px;width:1212px;height:1px;background:#dadada"></div>
<div style="position:absolute;left:25px;top:599px;width:1212px;height:1px;background:#dadada"></div>
<div style="position:absolute;left:25px;top:618px;width:1212px;height:1px;background:#dadada"></div>
<div style="position:absolute;left:25px;top:638px;width:1212px;height:1px;background:#dadada"></div>
<div style="position:absolute;left:25px;top:657px;width:1212px;height:1px;background:#dadada"></div>
<div style="position:absolute;left:173px;top:218px;width:1px;height:440px;background:#dadada"></div>
<div style="position:absolute;left:376px;top:218px;width:1px;height:440px;background:#dadada"></div>
<div style="position:absolute;left:473px;top:218px;width:1px;height:440px;background:#dadada"></div>
<div style="position:absolute;left:592px;top:218px;width:1px;height:440px;background:#dadada"></div>
<div style="position:absolute;left:670px;top:218px;width:1px;height:440px;background:#dadada"></div>
<div style="position:absolute;left:772px;top:218px;width:1px;height:440px;background:#dadada"></div>
<div style="position:absolute;left:886px;top:218px;width:1px;height:440px;background:#dadada"></div>
<div style="position:absolute;left:964px;top:218px;width:1px;height:440px;background:#dadada"></div>
<div style="position:absolute;left:1037px;top:218px;width:1px;height:440px;background:#dadada"></div>
<div style="position:absolute;left:1111px;top:218px;width:1px;height:440px;background:#dadada"></div>
<div style="position:absolute;left:1184px;top:218px;width:1px;height:440px;background:#dadada"></div>
<div style="position:absolute;left:1237px;top:216px;width:2px;height:443px;background:#ababab"></div>
<div style="position:absolute;left:0px;top:657px;width:1238px;height:2px;background:#ababab"></div>
<span id="t65" style="position:absolute;left:9.80px;top:294.04px;font:normal 12.35px/1 'Liberation Sans',sans-serif;color:#333;white-space:pre;transform-origin:0 0;transform:scaleX(0.9309);">1</span>
<span id="t66" style="position:absolute;left:9.80px;top:324.24px;font:normal 12.35px/1 'Liberation Sans',sans-serif;color:#333;white-space:pre;transform-origin:0 0;transform:scaleX(0.9309);">2</span>
<span id="t67" style="position:absolute;left:9.80px;top:344.24px;font:normal 12.35px/1 'Liberation Sans',sans-serif;color:#333;white-space:pre;transform-origin:0 0;transform:scaleX(0.9309);">3</span>
<span id="t68" style="position:absolute;left:9.80px;top:364.24px;font:normal 12.35px/1 'Liberation Sans',sans-serif;color:#333;white-space:pre;transform-origin:0 0;transform:scaleX(0.9309);">4</span>
<span id="t69" style="position:absolute;left:9.80px;top:385.24px;font:normal 12.35px/1 'Liberation Sans',sans-serif;color:#217346;white-space:pre;transform-origin:0 0;transform:scaleX(0.9309);">5</span>
<span id="t70" style="position:absolute;left:9.80px;top:398.24px;font:normal 12.35px/1 'Liberation Sans',sans-serif;color:#333;white-space:pre;transform-origin:0 0;transform:scaleX(0.9309);">6</span>
<span id="t71" style="position:absolute;left:9.80px;top:448.24px;font:normal 12.35px/1 'Liberation Sans',sans-serif;color:#333;white-space:pre;transform-origin:0 0;transform:scaleX(0.9309);">7</span>
<span id="t72" style="position:absolute;left:9.80px;top:468.24px;font:normal 12.35px/1 'Liberation Sans',sans-serif;color:#333;white-space:pre;transform-origin:0 0;transform:scaleX(0.9309);">8</span>
<span id="t73" style="position:absolute;left:9.80px;top:487.24px;font:normal 12.35px/1 'Liberation Sans',sans-serif;color:#333;white-space:pre;transform-origin:0 0;transform:scaleX(0.9309);">9</span>
<span id="t74" style="position:absolute;left:7.10px;top:506.24px;font:normal 12.35px/1 'Liberation Sans',sans-serif;color:#333;white-space:pre;transform-origin:0 0;transform:scaleX(0.8592);">10</span>
<span id="t75" style="position:absolute;left:7.10px;top:526.24px;font:normal 12.35px/1 'Liberation Sans',sans-serif;color:#333;white-space:pre;transform-origin:0 0;transform:scaleX(0.9199);">11</span>
<span id="t76" style="position:absolute;left:7.10px;top:545.24px;font:normal 12.35px/1 'Liberation Sans',sans-serif;color:#333;white-space:pre;transform-origin:0 0;transform:scaleX(0.8592);">12</span>
<span id="t77" style="position:absolute;left:7.10px;top:565.24px;font:normal 12.35px/1 'Liberation Sans',sans-serif;color:#333;white-space:pre;transform-origin:0 0;transform:scaleX(0.8592);">13</span>
<span id="t78" style="position:absolute;left:7.10px;top:584.24px;font:normal 12.35px/1 'Liberation Sans',sans-serif;color:#333;white-space:pre;transform-origin:0 0;transform:scaleX(0.8592);">14</span>
<span id="t79" style="position:absolute;left:7.10px;top:603.24px;font:normal 12.35px/1 'Liberation Sans',sans-serif;color:#333;white-space:pre;transform-origin:0 0;transform:scaleX(0.8592);">15</span>
<span id="t80" style="position:absolute;left:7.10px;top:623.24px;font:normal 12.35px/1 'Liberation Sans',sans-serif;color:#333;white-space:pre;transform-origin:0 0;transform:scaleX(0.8592);">16</span>
<span id="t81" style="position:absolute;left:7.10px;top:642.24px;font:normal 12.35px/1 'Liberation Sans',sans-serif;color:#333;white-space:pre;transform-origin:0 0;transform:scaleX(0.8592);">17</span>
<span id="t82" style="position:absolute;left:30.30px;top:279.23px;font:normal 30.09px/1 'Liberation Sans',sans-serif;color:#000;white-space:pre;transform-origin:0 0;transform:scaleX(0.9527);">Almacén</span>
<div style="position:absolute;left:173px;top:339px;width:791px;height:61px;background:#fff"></div>
<div style="position:absolute;left:173px;top:414px;width:791px;height:49px;background:#4472c4"></div>
<div style="position:absolute;left:172px;top:338px;width:202px;height:2px;background:#000"></div>
<div style="position:absolute;left:172px;top:398px;width:202px;height:2px;background:#000"></div>
<div style="position:absolute;left:172px;top:338px;width:2px;height:62px;background:#000"></div>
<div style="position:absolute;left:172px;top:358px;width:202px;height:2px;background:#000"></div>
<div style="position:absolute;left:172px;top:378px;width:202px;height:2px;background:#000"></div>
<div style="position:absolute;left:672px;top:338px;width:292px;height:2px;background:#000"></div>
<div style="position:absolute;left:672px;top:398px;width:292px;height:2px;background:#000"></div>
<div style="position:absolute;left:672px;top:358px;width:292px;height:2px;background:#000"></div>
<div style="position:absolute;left:771px;top:338px;width:2px;height:62px;background:#000"></div>
<div style="position:absolute;left:963px;top:338px;width:2px;height:62px;background:#000"></div>
<div style="position:absolute;left:376px;top:339px;width:295px;height:20px;background:#e9edf8"></div>
<div style="position:absolute;left:376px;top:338px;width:295px;height:2px;background:#3b6fd6"></div>
<div style="position:absolute;left:376px;top:338px;width:1px;height:20px;background:#3b6fd6"></div>
<div style="position:absolute;left:670px;top:338px;width:1px;height:20px;background:#3b6fd6"></div>
<div style="position:absolute;left:374px;top:336px;width:5px;height:5px;background:#3b6fd6"></div>
<div style="position:absolute;left:668px;top:336px;width:5px;height:5px;background:#3b6fd6"></div>
<div style="position:absolute;left:376px;top:360px;width:295px;height:19px;background:#f8e7e7"></div>
<div style="position:absolute;left:376px;top:358px;width:295px;height:1px;background:#b94a4a"></div>
<div style="position:absolute;left:377px;top:359px;width:293px;height:2px;background:repeating-linear-gradient(90deg,#217346 0 5px,#fff 5px 8px)"></div>
<div style="position:absolute;left:377px;top:378px;width:293px;height:2px;background:repeating-linear-gradient(90deg,#217346 0 5px,#fff 5px 8px)"></div>
<div style="position:absolute;left:376px;top:361px;width:2px;height:17px;background:repeating-linear-gradient(180deg,#217346 0 5px,#fff 5px 8px)"></div>
<div style="position:absolute;left:669px;top:361px;width:2px;height:17px;background:repeating-linear-gradient(180deg,#217346 0 5px,#fff 5px 8px)"></div>
<div style="position:absolute;left:374px;top:357px;width:5px;height:5px;background:#c03a3a"></div>
<div style="position:absolute;left:668px;top:357px;width:5px;height:5px;background:#c03a3a"></div>
<div style="position:absolute;left:375px;top:378px;width:4px;height:3px;background:#c03a3a"></div>
<div style="position:absolute;left:668px;top:378px;width:4px;height:3px;background:#c03a3a"></div>
<div style="position:absolute;left:376px;top:381px;width:2px;height:20px;background:#217346"></div>
<div style="position:absolute;left:669px;top:381px;width:2px;height:20px;background:#217346"></div>
<div style="position:absolute;left:376px;top:400px;width:295px;height:2px;background:#217346"></div>
<span id="t83" style="position:absolute;left:175.30px;top:342.76px;font:bold 13.52px/1 'Liberation Sans',sans-serif;color:#000;white-space:pre;transform-origin:0 0;transform:scaleX(0.8795);">Total precio de compra</span>
<span id="t84" style="position:absolute;left:175.30px;top:362.96px;font:bold 13.52px/1 'Liberation Sans',sans-serif;color:#000;white-space:pre;transform-origin:0 0;transform:scaleX(0.8938);">Valor total estimado artículos</span>
<span id="t85" style="position:absolute;left:175.30px;top:383.36px;font:bold 13.52px/1 'Liberation Sans',sans-serif;color:#000;white-space:pre;transform-origin:0 0;transform:scaleX(0.8767);">Diferencia actual precio de compra</span>
<span id="t86" style="position:absolute;left:507.90px;top:343.13px;font:bold 13.08px/1 'Liberation Sans',sans-serif;color:#000;white-space:pre;transform-origin:0 0;transform:scaleX(0.8962);">13104</span>
<span id="t87" style="position:absolute;left:699.10px;top:343.13px;font:bold 13.08px/1 'Liberation Sans',sans-serif;color:#000;white-space:pre;transform-origin:0 0;transform:scaleX(0.8712);">Recargo</span>
<span id="t88" style="position:absolute;left:798.50px;top:343.13px;font:bold 13.08px/1 'Liberation Sans',sans-serif;color:#000;white-space:pre;transform-origin:0 0;transform:scaleX(0.9188);">Total artículos inventario</span>
<span id="t89" style="position:absolute;left:504.20px;top:384.92px;font:normal 12.50px/1 'Liberation Sans',sans-serif;color:#000;white-space:pre;transform-origin:0 0;transform:scaleX(0.9044);">=<span style="color:#3b6fd6">C3</span>-<span style="color:#c0392b">C4</span></span>
<div style="position:absolute;left:543px;top:381px;width:1px;height:17px;background:#000"></div>
<svg style="position:absolute;left:580px;top:389px;overflow:visible" width="10" height="17" viewBox="0 0 10 17"><path d="M1.5 1h2.5l1 1 1-1h2.5M5 2v12M1.5 15h2.5l1-1 1 1h2.5" fill="none" stroke="#333" stroke-width="1"/></svg>
<span id="t90" style="position:absolute;left:221.40px;top:434.06px;font:bold 11.63px/1 'Liberation Sans',sans-serif;color:#fff;white-space:pre;transform-origin:0 0;transform:scaleX(0.9038);-webkit-text-stroke:0.1px #fff">Artículo / Descripción</span>
<span id="t91" style="position:absolute;left:385.30px;top:434.06px;font:bold 11.63px/1 'Liberation Sans',sans-serif;color:#fff;white-space:pre;transform-origin:0 0;transform:scaleX(0.9597);-webkit-text-stroke:0.1px #fff">Marca / Modelo</span>
<span id="t92" style="position:absolute;left:491.30px;top:425.66px;font:bold 11.63px/1 'Liberation Sans',sans-serif;color:#fff;white-space:pre;transform-origin:0 0;transform:scaleX(0.8375);-webkit-text-stroke:0.1px #fff">N° identificación /</span>
<span id="t93" style="position:absolute;left:476.40px;top:440.46px;font:bold 11.63px/1 'Liberation Sans',sans-serif;color:#fff;white-space:pre;transform-origin:0 0;transform:scaleX(0.8298);-webkit-text-stroke:0.1px #fff">Serie/Código/Referencia</span>
<span id="t94" style="position:absolute;left:609.20px;top:425.66px;font:bold 11.63px/1 'Liberation Sans',sans-serif;color:#fff;white-space:pre;transform-origin:0 0;transform:scaleX(0.8789);-webkit-text-stroke:0.1px #fff">Fecha de</span>
<span id="t95" style="position:absolute;left:612.40px;top:440.66px;font:bold 11.63px/1 'Liberation Sans',sans-serif;color:#fff;white-space:pre;transform-origin:0 0;transform:scaleX(0.9190);-webkit-text-stroke:0.1px #fff">compra</span>
<span id="t96" style="position:absolute;left:679.60px;top:434.26px;font:bold 11.63px/1 'Liberation Sans',sans-serif;color:#fff;white-space:pre;transform-origin:0 0;transform:scaleX(0.8970);-webkit-text-stroke:0.1px #fff">Lugar de compra</span>
<span id="t97" style="position:absolute;left:785.50px;top:433.66px;font:bold 11.63px/1 'Liberation Sans',sans-serif;color:#fff;white-space:pre;transform-origin:0 0;transform:scaleX(0.9010);-webkit-text-stroke:0.1px #fff">Precio de compra</span>
<span id="t98" style="position:absolute;left:901.10px;top:424.86px;font:bold 11.63px/1 'Liberation Sans',sans-serif;color:#fff;white-space:pre;transform-origin:0 0;transform:scaleX(0.9017);-webkit-text-stroke:0.1px #fff">Precio de</span>
<span id="t99" style="position:absolute;left:909.90px;top:441.16px;font:bold 11.63px/1 'Liberation Sans',sans-serif;color:#fff;white-space:pre;transform-origin:0 0;transform:scaleX(0.9745);-webkit-text-stroke:0.1px #fff">venta</span>
<span id="t100" style="position:absolute;left:175.70px;top:468.13px;font:normal 13.66px/1 'Liberation Sans',sans-serif;color:#000;white-space:pre;transform-origin:0 0;transform:scaleX(0.9366);">Calzado deportivo</span>
<span id="t101" style="position:absolute;left:379.10px;top:468.13px;font:normal 13.66px/1 'Liberation Sans',sans-serif;color:#000;white-space:pre;transform-origin:0 0;transform:scaleX(0.9366);">Modelo 1</span>
<span id="t102" style="position:absolute;left:604.37px;top:468.13px;font:normal 13.66px/1 'Liberation Sans',sans-serif;color:#000;white-space:pre;transform-origin:0 0;transform:scaleX(0.9366);">26/10/2017</span>
<span id="t103" style="position:absolute;left:672.30px;top:468.13px;font:normal 13.66px/1 'Liberation Sans',sans-serif;color:#000;white-space:pre;transform-origin:0 0;transform:scaleX(0.9366);">Proveedor 1</span>
<span id="t104" style="position:absolute;left:855.74px;top:468.13px;font:normal 13.66px/1 'Liberation Sans',sans-serif;color:#000;white-space:pre;transform-origin:0 0;transform:scaleX(0.9366);">2422</span>
<span id="t105" style="position:absolute;left:175.70px;top:487.13px;font:normal 13.66px/1 'Liberation Sans',sans-serif;color:#000;white-space:pre;transform-origin:0 0;transform:scaleX(0.9366);">Playera</span>
<span id="t106" style="position:absolute;left:379.10px;top:487.13px;font:normal 13.66px/1 'Liberation Sans',sans-serif;color:#000;white-space:pre;transform-origin:0 0;transform:scaleX(0.9366);">Modelo 2</span>
<span id="t107" style="position:absolute;left:604.37px;top:487.13px;font:normal 13.66px/1 'Liberation Sans',sans-serif;color:#000;white-space:pre;transform-origin:0 0;transform:scaleX(0.9366);">26/10/2017</span>
<span id="t108" style="position:absolute;left:672.30px;top:487.13px;font:normal 13.66px/1 'Liberation Sans',sans-serif;color:#000;white-space:pre;transform-origin:0 0;transform:scaleX(0.9366);">Proveedor 2</span>
<span id="t109" style="position:absolute;left:855.74px;top:487.13px;font:normal 13.66px/1 'Liberation Sans',sans-serif;color:#000;white-space:pre;transform-origin:0 0;transform:scaleX(0.9366);">1822</span>
<span id="t110" style="position:absolute;left:175.70px;top:506.13px;font:normal 13.66px/1 'Liberation Sans',sans-serif;color:#000;white-space:pre;transform-origin:0 0;transform:scaleX(0.9366);">Saco dama</span>
<span id="t111" style="position:absolute;left:379.10px;top:506.13px;font:normal 13.66px/1 'Liberation Sans',sans-serif;color:#000;white-space:pre;transform-origin:0 0;transform:scaleX(0.9366);">Modelo 3</span>
<span id="t112" style="position:absolute;left:604.37px;top:506.13px;font:normal 13.66px/1 'Liberation Sans',sans-serif;color:#000;white-space:pre;transform-origin:0 0;transform:scaleX(0.9366);">26/10/2017</span>
<span id="t113" style="position:absolute;left:672.30px;top:506.13px;font:normal 13.66px/1 'Liberation Sans',sans-serif;color:#000;white-space:pre;transform-origin:0 0;transform:scaleX(0.9366);">Proveedor 3</span>
<span id="t114" style="position:absolute;left:855.74px;top:506.13px;font:normal 13.66px/1 'Liberation Sans',sans-serif;color:#000;white-space:pre;transform-origin:0 0;transform:scaleX(0.9366);">1290</span>
<span id="t115" style="position:absolute;left:175.70px;top:526.13px;font:normal 13.66px/1 'Liberation Sans',sans-serif;color:#000;white-space:pre;transform-origin:0 0;transform:scaleX(0.9366);">Camisa</span>
<span id="t116" style="position:absolute;left:379.10px;top:526.13px;font:normal 13.66px/1 'Liberation Sans',sans-serif;color:#000;white-space:pre;transform-origin:0 0;transform:scaleX(0.9366);">Modelo 4</span>
<span id="t117" style="position:absolute;left:604.37px;top:526.13px;font:normal 13.66px/1 'Liberation Sans',sans-serif;color:#000;white-space:pre;transform-origin:0 0;transform:scaleX(0.9366);">26/10/2017</span>
<span id="t118" style="position:absolute;left:672.30px;top:526.13px;font:normal 13.66px/1 'Liberation Sans',sans-serif;color:#000;white-space:pre;transform-origin:0 0;transform:scaleX(0.9366);">Proveedor 4</span>
<span id="t119" style="position:absolute;left:855.74px;top:526.13px;font:normal 13.66px/1 'Liberation Sans',sans-serif;color:#000;white-space:pre;transform-origin:0 0;transform:scaleX(0.9366);">1407</span>
<span id="t120" style="position:absolute;left:175.70px;top:545.13px;font:normal 13.66px/1 'Liberation Sans',sans-serif;color:#000;white-space:pre;transform-origin:0 0;transform:scaleX(0.9366);">Corbata</span>
<span id="t121" style="position:absolute;left:379.10px;top:545.13px;font:normal 13.66px/1 'Liberation Sans',sans-serif;color:#000;white-space:pre;transform-origin:0 0;transform:scaleX(0.9366);">Modelo 5</span>
<span id="t122" style="position:absolute;left:604.37px;top:545.13px;font:normal 13.66px/1 'Liberation Sans',sans-serif;color:#000;white-space:pre;transform-origin:0 0;transform:scaleX(0.9366);">26/10/2017</span>
<span id="t123" style="position:absolute;left:672.30px;top:545.13px;font:normal 13.66px/1 'Liberation Sans',sans-serif;color:#000;white-space:pre;transform-origin:0 0;transform:scaleX(0.9366);">Proveedor 5</span>
<span id="t124" style="position:absolute;left:855.74px;top:545.13px;font:normal 13.66px/1 'Liberation Sans',sans-serif;color:#000;white-space:pre;transform-origin:0 0;transform:scaleX(0.9366);">2484</span>
<span id="t125" style="position:absolute;left:175.70px;top:565.13px;font:normal 13.66px/1 'Liberation Sans',sans-serif;color:#000;white-space:pre;transform-origin:0 0;transform:scaleX(0.9366);">Lentes de sol</span>
<span id="t126" style="position:absolute;left:379.10px;top:565.13px;font:normal 13.66px/1 'Liberation Sans',sans-serif;color:#000;white-space:pre;transform-origin:0 0;transform:scaleX(0.9366);">Modelo 6</span>
<span id="t127" style="position:absolute;left:604.37px;top:565.13px;font:normal 13.66px/1 'Liberation Sans',sans-serif;color:#000;white-space:pre;transform-origin:0 0;transform:scaleX(0.9366);">26/10/2017</span>
<span id="t128" style="position:absolute;left:672.30px;top:565.13px;font:normal 13.66px/1 'Liberation Sans',sans-serif;color:#000;white-space:pre;transform-origin:0 0;transform:scaleX(0.9366);">Proveedor 6</span>
<span id="t129" style="position:absolute;left:855.74px;top:565.13px;font:normal 13.66px/1 'Liberation Sans',sans-serif;color:#000;white-space:pre;transform-origin:0 0;transform:scaleX(0.9366);">1812</span>
<span id="t130" style="position:absolute;left:175.70px;top:584.13px;font:normal 13.66px/1 'Liberation Sans',sans-serif;color:#000;white-space:pre;transform-origin:0 0;transform:scaleX(0.9366);">Pantalón</span>
<span id="t131" style="position:absolute;left:379.10px;top:584.13px;font:normal 13.66px/1 'Liberation Sans',sans-serif;color:#000;white-space:pre;transform-origin:0 0;transform:scaleX(0.9366);">Modelo 7</span>
<span id="t132" style="position:absolute;left:604.37px;top:584.13px;font:normal 13.66px/1 'Liberation Sans',sans-serif;color:#000;white-space:pre;transform-origin:0 0;transform:scaleX(0.9366);">26/10/2017</span>
<span id="t133" style="position:absolute;left:672.30px;top:584.13px;font:normal 13.66px/1 'Liberation Sans',sans-serif;color:#000;white-space:pre;transform-origin:0 0;transform:scaleX(0.9366);">Proveedor 7</span>
<span id="t134" style="position:absolute;left:862.85px;top:584.13px;font:normal 13.66px/1 'Liberation Sans',sans-serif;color:#000;white-space:pre;transform-origin:0 0;transform:scaleX(0.9366);">836</span>
<span id="t135" style="position:absolute;left:175.70px;top:603.13px;font:normal 13.66px/1 'Liberation Sans',sans-serif;color:#000;white-space:pre;transform-origin:0 0;transform:scaleX(0.9366);">Bolso dama</span>
<span id="t136" style="position:absolute;left:379.10px;top:603.13px;font:normal 13.66px/1 'Liberation Sans',sans-serif;color:#000;white-space:pre;transform-origin:0 0;transform:scaleX(0.9366);">Modelo 8</span>
<span id="t137" style="position:absolute;left:604.37px;top:603.13px;font:normal 13.66px/1 'Liberation Sans',sans-serif;color:#000;white-space:pre;transform-origin:0 0;transform:scaleX(0.9366);">26/10/2017</span>
<span id="t138" style="position:absolute;left:672.30px;top:603.13px;font:normal 13.66px/1 'Liberation Sans',sans-serif;color:#000;white-space:pre;transform-origin:0 0;transform:scaleX(0.9366);">Proveedor 8</span>
<span id="t139" style="position:absolute;left:855.74px;top:603.13px;font:normal 13.66px/1 'Liberation Sans',sans-serif;color:#000;white-space:pre;transform-origin:0 0;transform:scaleX(0.9366);">1031</span>
<div style="position:absolute;left:1px;top:659px;width:1253px;height:26px;background:#e6e6e6"></div>
<svg style="position:absolute;left:24px;top:666px;overflow:visible" width="6" height="9" viewBox="0 0 6 9"><path d="M5 0.5L1 4.5 5 8.5z" fill="#c4c4c4"/></svg>
<svg style="position:absolute;left:51px;top:666px;overflow:visible" width="6" height="9" viewBox="0 0 6 9"><path d="M1 0.5l4 4-4 4z" fill="#c4c4c4"/></svg>
<div style="position:absolute;left:93px;top:662px;width:1px;height:19px;background:#b8b8b8"></div>
<span id="t140" style="position:absolute;left:105.20px;top:664.66px;font:normal 12.21px/1 'Liberation Sans',sans-serif;color:#555;white-space:pre;transform-origin:0 0;transform:scaleX(1.0070);">Inicio</span>
<div style="position:absolute;left:147px;top:659px;width:71px;height:23px;background:#fff;border-left:1px solid #c4c4c4;border-right:1px solid #c4c4c4;box-sizing:border-box"></div>
<div style="position:absolute;left:147px;top:680px;width:71px;height:2px;background:#217346"></div>
<span id="t141" style="position:absolute;left:157.50px;top:664.66px;font:bold 12.21px/1 'Liberation Sans',sans-serif;color:#217346;white-space:pre;transform-origin:0 0;transform:scaleX(0.9631);">Almacén</span>
<span id="t142" style="position:absolute;left:228.50px;top:664.66px;font:normal 12.21px/1 'Liberation Sans',sans-serif;color:#555;white-space:pre;transform-origin:0 0;transform:scaleX(0.9957);">Empleados</span>
<div style="position:absolute;left:301px;top:662px;width:1px;height:19px;background:#b8b8b8"></div>
<span id="t143" style="position:absolute;left:313.50px;top:664.66px;font:normal 12.21px/1 'Liberation Sans',sans-serif;color:#555;white-space:pre;transform-origin:0 0;transform:scaleX(0.9741);">Compras y ventas</span>
<div style="position:absolute;left:423px;top:662px;width:1px;height:19px;background:#b8b8b8"></div>
<span id="t144" style="position:absolute;left:435.10px;top:664.66px;font:normal 12.21px/1 'Liberation Sans',sans-serif;color:#555;white-space:pre;transform-origin:0 0;transform:scaleX(0.9988);">Catálogo</span>
<div style="position:absolute;left:496px;top:662px;width:1px;height:19px;background:#b8b8b8"></div>
<span id="t145" style="position:absolute;left:506.80px;top:664.66px;font:normal 12.21px/1 'Liberation Sans',sans-serif;color:#555;white-space:pre;transform-origin:0 0;transform:scaleX(0.9542);">Gastos</span>
<div style="position:absolute;left:556px;top:662px;width:1px;height:19px;background:#b8b8b8"></div>
<span id="t146" style="position:absolute;left:566.60px;top:664.66px;font:normal 12.21px/1 'Liberation Sans',sans-serif;color:#555;white-space:pre;transform-origin:0 0;transform:scaleX(0.9692);">Factura</span>
<div style="position:absolute;left:619px;top:662px;width:1px;height:19px;background:#b8b8b8"></div>
<svg style="position:absolute;left:649px;top:663px;overflow:visible" width="16" height="16" viewBox="0 0 16 16"><circle cx="8" cy="8" r="7" fill="none" stroke="#777" stroke-width="1.2"/><path d="M8 4v8M4 8h8" stroke="#777" stroke-width="1.5"/></svg>
<svg style="position:absolute;left:753px;top:664px;overflow:visible" width="3" height="13" viewBox="0 0 3 13"><circle cx="1.5" cy="1.5" r="0.9" fill="#9a9a9a"/><circle cx="1.5" cy="6" r="0.9" fill="#9a9a9a"/><circle cx="1.5" cy="10.5" r="0.9" fill="#9a9a9a"/></svg>
<div style="position:absolute;left:770px;top:665px;width:467px;height:14px;background:#dcdcdc"></div>
<div style="position:absolute;left:770px;top:665px;width:14px;height:14px;background:#fff;border:1px solid #c6c6c6;box-sizing:border-box"></div>
<svg style="position:absolute;left:774px;top:668px;overflow:visible" width="5" height="8" viewBox="0 0 5 8"><path d="M4.5 0.5L0.5 4l4 3.5z" fill="#444"/></svg>
<div style="position:absolute;left:783px;top:665px;width:398px;height:14px;background:#fff;border:1px solid #c6c6c6;box-sizing:border-box"></div>
<div style="position:absolute;left:1223px;top:665px;width:14px;height:14px;background:#fff;border:1px solid #c6c6c6;box-sizing:border-box"></div>
<svg style="position:absolute;left:1228px;top:668px;overflow:visible" width="5" height="8" viewBox="0 0 5 8"><path d="M0.5 0.5L4.5 4l-4 3.5z" fill="#444"/></svg>
<div style="position:absolute;left:1238px;top:198px;width:16px;height:460px;background:#e6e6e6"></div>
<div style="position:absolute;left:1240px;top:216px;width:14px;height:441px;background:#dcdcdc"></div>
<div style="position:absolute;left:1240px;top:200px;width:14px;height:15px;background:#fff;border:1px solid #c6c6c6;box-sizing:border-box"></div>
<svg style="position:absolute;left:1243px;top:205px;overflow:visible" width="8" height="5" viewBox="0 0 8 5"><path d="M0.5 4.5L4 0.5l3.5 4z" fill="#555"/></svg>
<div style="position:absolute;left:1240px;top:216px;width:14px;height:359px;background:#fff;border:1px solid #c6c6c6;box-sizing:border-box"></div>
<div style="position:absolute;left:1240px;top:643px;width:14px;height:15px;background:#fff;border:1px solid #c6c6c6;box-sizing:border-box"></div>
<svg style="position:absolute;left:1243px;top:648px;overflow:visible" width="8" height="5" viewBox="0 0 8 5"><path d="M0.5 0.5L4 4.5l3.5-4z" fill="#555"/></svg>
<div style="position:absolute;left:1px;top:686px;width:1253px;height:19px;background:#f0f0f0"></div>
<div style="position:absolute;left:0px;top:685px;width:1254px;height:1px;background:#d0d0d0"></div>
<div style="position:absolute;left:0px;top:705px;width:1254px;height:1px;background:#111"></div>
<span id="t147" style="position:absolute;left:8.50px;top:689.95px;font:normal 11.05px/1 'Liberation Sans',sans-serif;color:#555;white-space:pre;transform-origin:0 0;transform:scaleX(0.9297);">Señalar</span>
<svg style="position:absolute;left:72px;top:688px;overflow:visible" width="14" height="13" viewBox="0 0 14 13"><circle cx="3" cy="3" r="2.6" fill="#666"/><rect x="6" y="1" width="7" height="3" fill="#888"/><rect x="1.5" y="6.5" width="11" height="6" fill="none" stroke="#777"/><path d="M5 6.5v6M8.5 6.5v6M1.5 9.5h11" stroke="#777"/></svg>
<svg style="position:absolute;left:999px;top:689px;overflow:visible" width="14" height="13" viewBox="0 0 14 13"><rect x="0.5" y="0.5" width="12" height="12" fill="none" stroke="#555"/><path d="M4.5 0.5v12M8.5 0.5v12M0.5 4.5h12M0.5 8.5h12" stroke="#555"/></svg>
<svg style="position:absolute;left:1034px;top:689px;overflow:visible" width="14" height="13" viewBox="0 0 14 13"><rect x="0.5" y="0.5" width="12" height="12" fill="none" stroke="#666"/><rect x="3" y="2.5" width="7" height="8" fill="none" stroke="#777"/><path d="M4 5h5M4 7h5M4 9h5" stroke="#aaa"/></svg>
<svg style="position:absolute;left:1069px;top:689px;overflow:visible" width="14" height="13" viewBox="0 0 14 13"><path d="M0.5 0.5h12v12h-12z" fill="none" stroke="#555"/><path d="M6.5 0.5v7h-6" fill="none" stroke="#555"/></svg>
<div style="position:absolute;left:1098px;top:694px;width:6px;height:1px;background:#888"></div>
<div style="position:absolute;left:1107px;top:694px;width:92px;height:1px;background:#b4b4b4"></div>
<div style="position:absolute;left:1154px;top:691px;width:1px;height:7px;background:#999"></div>
<svg style="position:absolute;left:1202px;top:689px;overflow:visible" width="11" height="11" viewBox="0 0 11 11"><path d="M5.5 0v11M0 5.5h11" stroke="#777" stroke-width="1.4"/></svg>
<span id="t148" style="position:absolute;left:1225.20px;top:688.90px;font:normal 11.34px/1 'Liberation Sans',sans-serif;color:#a8a8a8;white-space:pre;transform-origin:0 0;transform:scaleX(0.8729);">100%</span>
<svg style="position:absolute;left:170px;top:215px;overflow:visible" width="90" height="90" viewBox="0 0 90 90">
<defs><linearGradient id="hb" x1="0" y1="0" x2="0" y2="1"><stop offset="0" stop-color="#04a4fb"/><stop offset="1" stop-color="#1a86ee"/></linearGradient></defs>
<path d="M60 10.5v20h9v-20z" fill="#3d3d3d"/>
<path d="M9 35L43.2 8.5 77.5 35" fill="none" stroke="#3d3d3d" stroke-width="4.6" stroke-linecap="round" stroke-linejoin="round"/>
<path d="M43.2 19L13 41.5v37.5a2.5 2.5 0 0 0 2.5 2.5H33v-24.5a4 4 0 0 1 4-4h12.5a4 4 0 0 1 4 4V81.5h17a2.5 2.5 0 0 0 2.5-2.5V41.5z" fill="url(#hb)" stroke="#2f3a44" stroke-width="1.8" stroke-linejoin="round"/>
</svg>
<svg style="position:absolute;left:290px;top:215px;overflow:visible" width="90" height="85" viewBox="0 0 90 85">
<defs>
<linearGradient id="bf" x1="0" y1="0" x2="0" y2="1"><stop offset="0" stop-color="#f06c42"/><stop offset="1" stop-color="#dc532c"/></linearGradient>
<linearGradient id="bs" x1="0" y1="0" x2="0" y2="1"><stop offset="0" stop-color="#d9583a"/><stop offset="1" stop-color="#c04424"/></linearGradient>
<radialGradient id="sh" cx="0.5" cy="0.5" r="0.5"><stop offset="0" stop-color="#000" stop-opacity="0.12"/><stop offset="1" stop-color="#000" stop-opacity="0"/></radialGradient>
</defs>
<ellipse cx="46" cy="72" rx="40" ry="7" fill="url(#sh)"/>
<path d="M8 58L38 51l46 5-28 11z" fill="#e4d3a6"/>
<path d="M8 58l48 9v9L8 66z" fill="#d9c08c"/>
<path d="M56 67l28-11v8L56 76z" fill="#c5a56c"/>
<path d="M12 61.5l18 3.5v5l-18-3.5zM34 66l18 3.5v5l-18-3.5z" fill="#8f7a52" opacity="0.75"/>
<path d="M60 70l9-3.5v4l-9 3.5zM72 65.5l9-3.5v4l-9 3.5z" fill="#8f7a52" opacity="0.6"/>
<path d="M22 10l13-4.5 48 4-8 4z" fill="#f38056"/>
<path d="M22 10l23 3v23l-23-3z" fill="url(#bf)"/>
<path d="M45 13l30 1v24l-30-2z" fill="url(#bf)"/>
<path d="M75 14l8-4v24l-8 4z" fill="url(#bs)"/>
<path d="M45 13v23" stroke="#b84020" stroke-width="0.9"/>
<path d="M9 33.5l12-2.5 25 3-11 2z" fill="#f38056"/>
<path d="M9 34l37 2.5v25L9 59z" fill="url(#bf)"/>
<path d="M46 36.5l29 1.5v23l-29 .5z" fill="url(#bf)"/>
<path d="M75 38l8-4v23l-8 4z" fill="url(#bs)"/>
<path d="M46 36.5v25M46 36.5l29 1.5" stroke="#b84020" stroke-width="0.9"/>
<g fill="#fff" opacity="0.75"><rect x="26" y="15" width="5" height="1.5"/><rect x="26" y="18" width="7" height="1.5"/><rect x="49" y="19" width="6" height="1.5"/><rect x="49" y="22" width="8" height="1.5"/><rect x="12" y="40" width="6" height="1.5"/><rect x="12" y="43" width="7" height="1.5"/><rect x="38" y="28" width="4" height="2"/><rect x="67" y="31" width="4" height="2"/><rect x="30" y="55" width="4" height="2"/><rect x="50" y="44" width="3" height="4"/></g>
</svg>
<svg style="position:absolute;left:425px;top:215px;overflow:visible" width="70" height="90" viewBox="0 0 70 90">
<defs>
<radialGradient id="hd" cx="0.35" cy="0.3" r="0.75"><stop offset="0" stop-color="#fff3de"/><stop offset="0.5" stop-color="#f8cf98"/><stop offset="1" stop-color="#e9a660"/></radialGradient>
<linearGradient id="bd" x1="0" y1="0" x2="0" y2="1"><stop offset="0" stop-color="#f4f8ff"/><stop offset="0.55" stop-color="#bcd6fb"/><stop offset="1" stop-color="#6ea4f0"/></linearGradient>
<linearGradient id="tie" x1="0" y1="0" x2="1" y2="0"><stop offset="0" stop-color="#c81818"/><stop offset="0.5" stop-color="#f04040"/><stop offset="1" stop-color="#c01010"/></linearGradient>
</defs>
<path d="M17 38.5C11 40.5 6.5 48 5.5 57 4.5 66 5 74 9 79c3 3.5 7 3.8 13 3.8h25c6 0 10-.3 13-3.8 4-5 4.5-13 3.5-22-1-9-5.5-16.5-12.5-18.5z" fill="url(#bd)" stroke="#1f4fd8" stroke-width="2"/>
<path d="M15 42c-5 8-6 22-4 36M53 42c5 8 6 22 4 36" fill="none" stroke="#5a80d8" stroke-width="0.8"/>
<path d="M27 41l7 6 7-6 5 9-12 -3-12 3z" fill="#eaf2ff" stroke="#a8c4f0" stroke-width="0.6"/>
<path d="M30 45h8l-1.5 5 4 19-6.5 6-6.5-6 4-19z" fill="url(#tie)"/>
<rect x="43.5" y="58" width="9" height="9" fill="#c8dcfa" stroke="#9ab8ea" stroke-width="0.6"/><circle cx="48.5" cy="60" r="1" fill="#20a040"/>
<circle cx="34" cy="25" r="19.6" fill="url(#hd)" stroke="#cd8a45" stroke-width="1.6"/>
</svg>
<svg style="position:absolute;left:545px;top:232px;overflow:visible" width="66" height="52" viewBox="0 0 66 52">
<defs>
<linearGradient id="mt" x1="0" y1="0" x2="1" y2="1"><stop offset="0" stop-color="#d8ddd2"/><stop offset="1" stop-color="#b7c0ae"/></linearGradient>
<linearGradient id="gb" x1="0" y1="0" x2="1" y2="0"><stop offset="0" stop-color="#8ed21e"/><stop offset="1" stop-color="#c8ec6a"/></linearGradient>
</defs>

<path d="M4 28.5L41 4l20.5 9-30.5 23.5z" fill="url(#mt)" stroke="#6f7e65" stroke-width="1.2"/>
<path d="M4 28.5l27 8v12.5l-27-8z" fill="#c6cdbd"/>
<path d="M31 36.5L61.5 13v12.5L31 49z" fill="#a7b29b"/>
<path d="M5 32l26 8M5 35l26 8M5 38l26 8M31 40l30-23M31 43l30-23M31 46l30-23" stroke="#8c9882" stroke-width="0.7"/>
<ellipse cx="18" cy="24.5" rx="4" ry="2.5" fill="#9aa78f"/><ellipse cx="46" cy="12.5" rx="4" ry="2.5" fill="#9aa78f"/>
<path d="M22.5 17L35.5 10.5l16 7-13 10z" fill="url(#gb)"/>
<path d="M38.5 27.5l13-10v12.5l-13 10z" fill="#7cc21a"/>
</svg>
<svg style="position:absolute;left:662px;top:225px;overflow:visible" width="84" height="70" viewBox="0 0 84 70">
<defs>
<linearGradient id="nb" x1="0" y1="0" x2="1" y2="1"><stop offset="0" stop-color="#fbd062"/><stop offset="0.5" stop-color="#f2ab3a"/><stop offset="1" stop-color="#e2862c"/></linearGradient>
<linearGradient id="sp" x1="0" y1="0" x2="1" y2="0"><stop offset="0" stop-color="#c87a30"/><stop offset="0.4" stop-color="#fbd7a0"/><stop offset="1" stop-color="#e8a850"/></linearGradient>
</defs>
<path d="M77 4.5l3.5 1.5v60l-3.5 1z" fill="#f4f4f4" stroke="#d0d0d0" stroke-width="0.6"/>
<rect x="7" y="3" width="70" height="63.5" fill="url(#nb)"/>
<rect x="7" y="3" width="8" height="63.5" fill="url(#sp)"/>
<path d="M46 66.5l12-63.5h19v63.5z" fill="#e08a2a" opacity="0.3"/><path d="M22 3h3v63.5h-3z" fill="#fff" opacity="0.12"/>
<rect x="7" y="66" width="70" height="1.2" fill="#c88a40"/>
<g fill="none" stroke="#9a9a9a" stroke-width="1.6" stroke-linecap="round"><path d="M3.5 16.5c3-1.5 6-1.5 9 -1"/><path d="M3.5 29.5c3-1.5 6-1.5 9 -1"/><path d="M3.5 42.5c3-1.5 6-1.5 9 -1"/><path d="M3.5 56.5c3-1.5 6-1.5 9 -1"/></g>
<g fill="#1a1a1a"><circle cx="12.5" cy="15.5" r="1.8"/><circle cx="12.5" cy="28.5" r="1.8"/><circle cx="12.5" cy="41.5" r="1.8"/><circle cx="12.5" cy="55.5" r="1.8"/></g>
</svg>
<svg style="position:absolute;left:795px;top:217px;overflow:visible" width="64" height="85" viewBox="0 0 64 85">
<defs>
<linearGradient id="cb" x1="0" y1="0" x2="0" y2="1"><stop offset="0" stop-color="#d4d4d4"/><stop offset="1" stop-color="#9a9a9a"/></linearGradient>
<linearGradient id="lcd" x1="0" y1="0" x2="0" y2="1"><stop offset="0" stop-color="#d8d8d8"/><stop offset="1" stop-color="#b4b4b4"/></linearGradient>
</defs>
<rect x="0.5" y="0.3" width="63" height="83.5" rx="3.5" fill="url(#cb)" stroke="#606060" stroke-width="1"/>
<path d="M0.5 3.8a3.5 3.5 0 0 1 3.5-3.5h56a3.5 3.5 0 0 1 3.5 3.5V28.6H0.5z" fill="#393939"/>
<rect x="4.5" y="8" width="54.5" height="19" fill="url(#lcd)" stroke="#777" stroke-width="0.6"/>
<g transform="translate(7.5 24.5) scale(0.66 1.1)"><text x="0" y="0" font-family="Liberation Mono" font-size="17" fill="#a8a8a8">888</text><text x="30.6" y="0" font-family="Liberation Mono" font-size="17" fill="#404040">1250</text></g>
<rect x="5.5" y="33" width="8.2" height="8.5" rx="1" fill="#2c2c2c"/><rect x="17" y="33" width="8.2" height="8.5" rx="1" fill="#8e8e8e"/><rect x="27.5" y="33" width="8.2" height="8.5" rx="1" fill="#8e8e8e"/><rect x="38" y="33" width="8.2" height="8.5" rx="1" fill="#8e8e8e"/><rect x="49" y="33" width="8.2" height="8.5" rx="1" fill="#2c2c2c"/><rect x="5.5" y="45" width="8.2" height="8.5" rx="1" fill="#2c2c2c"/><rect x="17" y="45" width="8.2" height="8.5" rx="1" fill="#8e8e8e"/><rect x="27.5" y="45" width="8.2" height="8.5" rx="1" fill="#8e8e8e"/><rect x="38" y="45" width="8.2" height="8.5" rx="1" fill="#8e8e8e"/><rect x="49" y="45" width="8.2" height="8.5" rx="1" fill="#2c2c2c"/><rect x="5.5" y="56" width="8.2" height="8.5" rx="1" fill="#2c2c2c"/><rect x="17" y="56" width="8.2" height="8.5" rx="1" fill="#8e8e8e"/><rect x="27.5" y="56" width="8.2" height="8.5" rx="1" fill="#8e8e8e"/><rect x="38" y="56" width="8.2" height="8.5" rx="1" fill="#8e8e8e"/><rect x="49" y="56" width="8.2" height="20.5" rx="1" fill="#2c2c2c"/><rect x="5.5" y="68" width="8.2" height="8.5" rx="1" fill="#d42a2a"/><rect x="17" y="68" width="8.2" height="8.5" rx="1" fill="#8e8e8e"/><rect x="27.5" y="68" width="8.2" height="8.5" rx="1" fill="#8e8e8e"/><rect x="38" y="68" width="8.2" height="8.5" rx="1" fill="#2c2c2c"/>
</svg>
<svg style="position:absolute;left:905px;top:220px;overflow:visible" width="88" height="78" viewBox="0 0 88 78">
<defs>
<linearGradient id="dr" x1="0" y1="0" x2="0" y2="1"><stop offset="0" stop-color="#cfdcea"/><stop offset="1" stop-color="#a9bfd8"/></linearGradient>
<linearGradient id="dr2" x1="0" y1="0" x2="1" y2="0"><stop offset="0" stop-color="#a2b9d4"/><stop offset="1" stop-color="#7f9ec4"/></linearGradient>
<linearGradient id="yl" x1="0" y1="0" x2="0" y2="1"><stop offset="0" stop-color="#f6d67c"/><stop offset="1" stop-color="#dfb252"/></linearGradient>
<linearGradient id="kp" x1="0" y1="0" x2="1" y2="1"><stop offset="0" stop-color="#f2f2f2"/><stop offset="1" stop-color="#d2d2d2"/></linearGradient>
</defs>
<path d="M3.5 50.5l41.5 6v16l-41.5-7z" fill="url(#dr)" stroke="#8ea6c4" stroke-width="0.6"/>
<path d="M45 56.5L84 37.5v15.5L45 72.5z" fill="url(#dr2)"/>
<path d="M7 54l34 5v9.5L7 63.5z" fill="none" stroke="#9cb2cc" stroke-width="0.6"/>
<path d="M3.5 50.5L30 37l54 .5-39 19z" fill="#dbe4ee"/>
<path d="M7 46.5L26.5 32l54.5 1-35 20z" fill="url(#kp)"/>
<path d="M7 46.5l39 6.5v4.5L7 51z" fill="#c8c8c8"/>
<path d="M46 53l35-20v4L46 57.5z" fill="#b2b2b2"/>
<path d="M26.5 32L34.5 17.5l45 1.5 1.5 14-11 4z" fill="url(#yl)"/>
<path d="M70.5 37l10.5-4-1.5-14-10 6z" fill="#d3a646"/>
<path d="M31.5 27.5l4.5-3 31.5 2.5-4.5 4z" fill="#3c3c3c"/>
<path d="M58 29.5l4-2.5 5 .3-3.5 2.7z" fill="#4cae4c"/>
<path d="M42 20.5V6.5c0-3 2-4.5 5-4.5h14c3.5 0 6 2.5 6 6 0 3-2 5-4 5.5l-2-1.5V20z" fill="#f4f4f4" stroke="#c2c2c2" stroke-width="0.8"/>
<g fill="#fbfbfb" stroke="#9a9a9a" stroke-width="0.5">
<rect x="21" y="37" width="4" height="2.4"/><rect x="26.5" y="36" width="4" height="2.4"/><rect x="32" y="35" width="4" height="2.4"/>
<rect x="18" y="40" width="4" height="2.4"/><rect x="23.5" y="39" width="4" height="2.4"/><rect x="29" y="38" width="4" height="2.4"/>
<rect x="15" y="43" width="4" height="2.4"/><rect x="20.5" y="42" width="4" height="2.4"/><rect x="26" y="41" width="4" height="2.4"/>
<rect x="10" y="46" width="8" height="2.4"/><rect x="21" y="45" width="4" height="2.4"/>
</g>
<rect x="44" y="42" width="6" height="3" fill="#8fd08f"/><rect x="50" y="37" width="5" height="2.5" fill="#b0c8e8"/><rect x="56" y="34" width="5" height="2.5" fill="#b0c8e8"/><rect x="39" y="37" width="4" height="2.5" fill="#b0c8e8"/>
<circle cx="40" cy="67" r="0.9" fill="#666"/>
</svg>
<svg style="position:absolute;left:0;top:0" width="1254" height="706">
<defs>
<linearGradient id="wg" gradientUnits="userSpaceOnUse" x1="0" y1="553" x2="0" y2="603"><stop offset="0" stop-color="#66c84e"/><stop offset="0.55" stop-color="#a2e070"/><stop offset="1" stop-color="#e0f8b0"/></linearGradient>
<radialGradient id="scr" cx="0.5" cy="0.45" r="0.65"><stop offset="0" stop-color="#bfe6f6"/><stop offset="1" stop-color="#5f9fd2"/></radialGradient>
<filter id="bl" x="-50%" y="-50%" width="200%" height="200%"><feGaussianBlur stdDeviation="3.5"/></filter>
</defs>
<g opacity="0.8"><path d="M1025.9 553.5 Q1008.8999999999999 577.95 1025.9 602.4" fill="none" stroke="url(#wg)" stroke-width="5.2"/><path d="M1173.2999999999997 553.5 Q1190.3 577.95 1173.2999999999997 602.4" fill="none" stroke="url(#wg)" stroke-width="5.2"/><path d="M1036 558.3 Q1024.4 578.2 1036 598.1" fill="none" stroke="url(#wg)" stroke-width="5.2"/><path d="M1163.1999999999998 558.3 Q1174.7999999999997 578.2 1163.1999999999998 598.1" fill="none" stroke="url(#wg)" stroke-width="5.2"/><path d="M1046.7 564.1 Q1037.1000000000001 578.75 1046.7 593.4" fill="none" stroke="url(#wg)" stroke-width="5.2"/><path d="M1152.4999999999998 564.1 Q1162.0999999999997 578.75 1152.4999999999998 593.4" fill="none" stroke="url(#wg)" stroke-width="5.2"/><path d="M1057.3 568.9 Q1049.8999999999999 578.45 1057.3 588" fill="none" stroke="url(#wg)" stroke-width="5.2"/><path d="M1141.8999999999999 568.9 Q1149.3 578.45 1141.8999999999999 588" fill="none" stroke="url(#wg)" stroke-width="5.2"/><path d="M1067.9 573.2 Q1061.5 578.5 1067.9 583.8" fill="none" stroke="url(#wg)" stroke-width="5.2"/><path d="M1131.2999999999997 573.2 Q1137.6999999999998 578.5 1131.2999999999997 583.8" fill="none" stroke="url(#wg)" stroke-width="5.2"/></g>
<rect x="1074.5" y="556" width="50.5" height="38.5" rx="2.5" fill="#8e8e8e"/>
<rect x="1077.5" y="559" width="44.5" height="32" fill="url(#scr)"/>
<path d="M1094 594.5h11l2 5h-15z" fill="#c4c4c4"/>
<rect x="1085" y="599.5" width="29" height="2.5" fill="#c8c8c8"/>
<rect x="1073.5" y="604.5" width="49.5" height="11" rx="3" fill="#c9c9c9"/>
<rect x="1075" y="605.5" width="46.5" height="6" rx="1.5" fill="#dadada"/>
<ellipse cx="1121" cy="651" rx="25" ry="10" fill="#000" opacity="0.5" filter="url(#bl)"/>
<g transform="translate(1014.3 653) scale(0.39 1)"><text x="0" y="0" font-family="Liberation Sans" font-weight="bold" font-size="41.5" fill="#6b7d9a" stroke="#6b7d9a" stroke-width="2.6" stroke-linejoin="round">EXPERTO</text></g>
<g transform="translate(1096.7 654) scale(0.46 1)"><text x="0" y="0" font-family="Liberation Sans" font-size="39" fill="#fdfdfd" stroke="#fdfdfd" stroke-width="1.2">digital</text></g>
<g transform="translate(1148.5 653) scale(0.385 1)"><text x="0" y="0" font-family="Liberation Sans" font-weight="bold" font-size="41.5" fill="#6b7d9a" stroke="#6b7d9a" stroke-width="2.6" stroke-linejoin="round">.NET</text></g>
</svg>
<div style="position:absolute;left:0px;top:0px;width:1px;height:706px;background:#0a0a0a"></div>
</body></html>
